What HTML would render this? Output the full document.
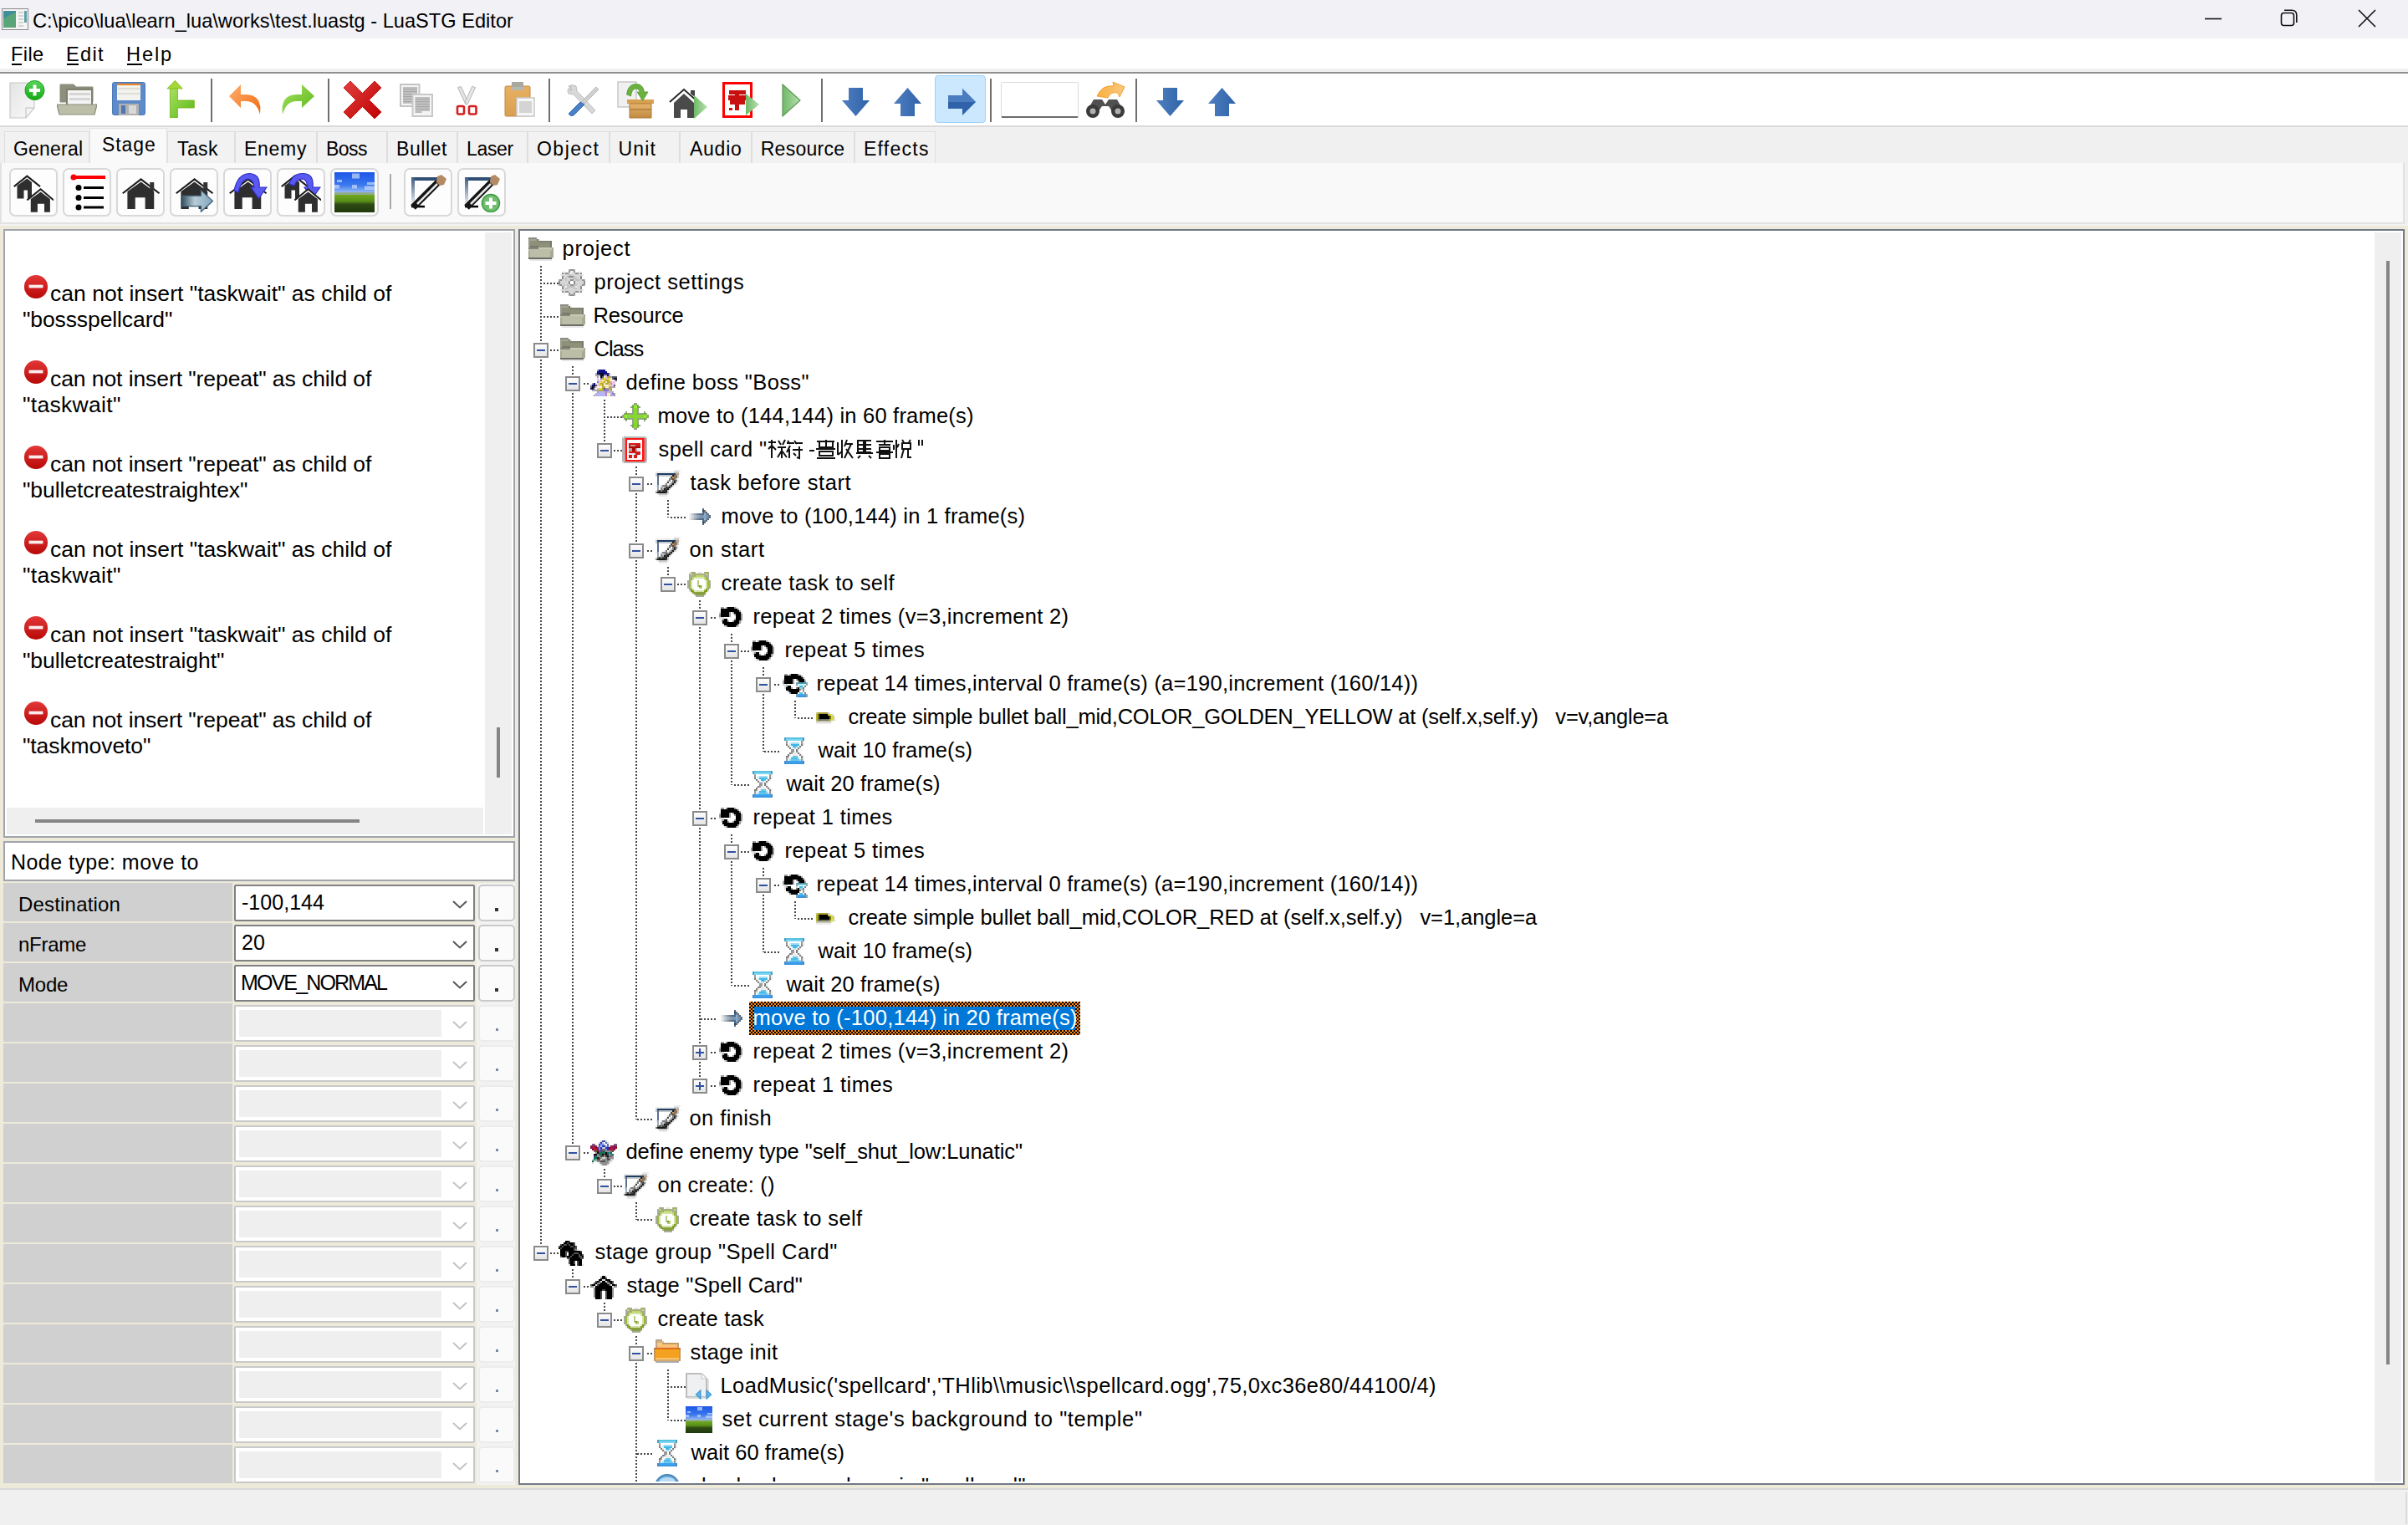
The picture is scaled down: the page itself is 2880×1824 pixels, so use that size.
<!DOCTYPE html><html><head><meta charset="utf-8"><title>LuaSTG Editor</title><style>
*{margin:0;padding:0;box-sizing:border-box}
html,body{width:2880px;height:1824px;overflow:hidden;background:#f0f0f0;font-family:"Liberation Sans", sans-serif;color:#000}
.t{position:absolute;white-space:pre;line-height:1}
.r{position:absolute}
.i{position:absolute;overflow:visible}
.b{position:absolute}
</style></head><body>
<svg width="0" height="0" style="position:absolute">
<defs>
<linearGradient id="gFoldF" x1="0" y1="0" x2="0" y2="1"><stop offset="0" stop-color="#cfd0bb"/><stop offset="1" stop-color="#b6b7a0"/></linearGradient>
<linearGradient id="gOrF" x1="0" y1="0" x2="0" y2="1"><stop offset="0" stop-color="#f7b34a"/><stop offset="1" stop-color="#f29a1c"/></linearGradient>
<linearGradient id="gArrow" x1="0" y1="0" x2="1" y2="0"><stop offset="0" stop-color="#f2f4f6"/><stop offset="0.6" stop-color="#8fa6bb"/><stop offset="1" stop-color="#6f8ba5"/></linearGradient>
<linearGradient id="gErr" x1="0" y1="0" x2="0" y2="1"><stop offset="0" stop-color="#e33838"/><stop offset="1" stop-color="#b80808"/></linearGradient>
<linearGradient id="gSky" x1="0" y1="0" x2="0" y2="1"><stop offset="0" stop-color="#2a62e6"/><stop offset="0.55" stop-color="#8eb2f0"/><stop offset="0.56" stop-color="#7fb23a"/><stop offset="1" stop-color="#2f4a14"/></linearGradient>
<linearGradient id="gPenF" x1="0" y1="0" x2="0" y2="1"><stop offset="0" stop-color="#3a5a80"/><stop offset="1" stop-color="#ffffff"/></linearGradient>
<linearGradient id="gBlue" x1="0" y1="0" x2="1" y2="0"><stop offset="0" stop-color="#4f7fc0"/><stop offset="1" stop-color="#2f62a8"/></linearGradient>
<linearGradient id="gExp" x1="0" y1="0" x2="0" y2="1"><stop offset="0" stop-color="#ffffff"/><stop offset="1" stop-color="#e2e2e2"/></linearGradient>
<linearGradient id="gPlay" x1="0" y1="0" x2="1" y2="0"><stop offset="0" stop-color="#6fb868"/><stop offset="1" stop-color="#b9e0b0"/></linearGradient>
<linearGradient id="gBrown" x1="0" y1="0" x2="0" y2="1"><stop offset="0" stop-color="#e6b66e"/><stop offset="1" stop-color="#c08a3e"/></linearGradient>

<!-- ===== tree icons (32x32 box) ===== -->
<symbol id="boss" viewBox="0 0 32 32"><rect x="8" y="0" width="2" height="2" fill="#a4a4b0"/><rect x="10" y="0" width="8" height="2" fill="#10108a"/><rect x="18" y="0" width="2" height="2" fill="#fcf8f4"/><rect x="8" y="2" width="12" height="2" fill="#10108a"/><rect x="20" y="2" width="2" height="2" fill="#fcf8f4"/><rect x="6" y="4" width="2" height="2" fill="#a4a4b0"/><rect x="8" y="4" width="2" height="2" fill="#10108a"/><rect x="10" y="4" width="6" height="2" fill="#0a0a24"/><rect x="16" y="4" width="6" height="2" fill="#10108a"/><rect x="22" y="4" width="2" height="2" fill="#a4a4b0"/><rect x="6" y="6" width="6" height="2" fill="#a4a4b0"/><rect x="12" y="6" width="4" height="2" fill="#0a0a24"/><rect x="16" y="6" width="4" height="2" fill="#a4a4b0"/><rect x="20" y="6" width="2" height="2" fill="#10108a"/><rect x="22" y="6" width="2" height="2" fill="#a4a4b0"/><rect x="6" y="8" width="2" height="2" fill="#fcf8f4"/><rect x="8" y="8" width="2" height="2" fill="#a4a4b0"/><rect x="10" y="8" width="2" height="2" fill="#fcf8f4"/><rect x="12" y="8" width="2" height="2" fill="#0a0a24"/><rect x="14" y="8" width="2" height="2" fill="#585868"/><rect x="16" y="8" width="2" height="2" fill="#f8f0c4"/><rect x="18" y="8" width="2" height="2" fill="#ecc4ec"/><rect x="20" y="8" width="4" height="2" fill="#b8a834"/><rect x="24" y="8" width="2" height="2" fill="#a4a4b0"/><rect x="26" y="8" width="6" height="2" fill="#585868"/><rect x="8" y="10" width="2" height="2" fill="#ecc4ec"/><rect x="10" y="10" width="2" height="2" fill="#fcf8f4"/><rect x="12" y="10" width="2" height="2" fill="#7a7ad8"/><rect x="14" y="10" width="2" height="2" fill="#b8a834"/><rect x="16" y="10" width="2" height="2" fill="#e8d840"/><rect x="18" y="10" width="2" height="2" fill="#e4b4a4"/><rect x="20" y="10" width="4" height="2" fill="#e8d840"/><rect x="24" y="10" width="2" height="2" fill="#f8f0c4"/><rect x="26" y="10" width="2" height="2" fill="#585868"/><rect x="28" y="10" width="4" height="2" fill="#0a0a24"/><rect x="8" y="12" width="6" height="2" fill="#ecc4ec"/><rect x="14" y="12" width="2" height="2" fill="#f8f0c4"/><rect x="16" y="12" width="2" height="2" fill="#e8d840"/><rect x="18" y="12" width="4" height="2" fill="#b8a834"/><rect x="22" y="12" width="2" height="2" fill="#e8d840"/><rect x="24" y="12" width="2" height="2" fill="#f8f0c4"/><rect x="26" y="12" width="2" height="2" fill="#fcf8f4"/><rect x="28" y="12" width="2" height="2" fill="#ecc4ec"/><rect x="30" y="12" width="2" height="2" fill="#585868"/><rect x="8" y="14" width="2" height="2" fill="#7a7ad8"/><rect x="10" y="14" width="2" height="2" fill="#ecc4ec"/><rect x="12" y="14" width="4" height="2" fill="#e8d840"/><rect x="16" y="14" width="2" height="2" fill="#b8a834"/><rect x="18" y="14" width="2" height="2" fill="#f8f0c4"/><rect x="20" y="14" width="4" height="2" fill="#b8a834"/><rect x="24" y="14" width="2" height="2" fill="#e4b4a4"/><rect x="26" y="14" width="4" height="2" fill="#ecc4ec"/><rect x="2" y="16" width="2" height="2" fill="#a4a4b0"/><rect x="4" y="16" width="2" height="2" fill="#10108a"/><rect x="6" y="16" width="2" height="2" fill="#fcf8f4"/><rect x="8" y="16" width="2" height="2" fill="#ecc4ec"/><rect x="10" y="16" width="2" height="2" fill="#e8d840"/><rect x="12" y="16" width="4" height="2" fill="#b8a834"/><rect x="16" y="16" width="2" height="2" fill="#f8f0c4"/><rect x="18" y="16" width="4" height="2" fill="#b8a834"/><rect x="22" y="16" width="2" height="2" fill="#e8d840"/><rect x="24" y="16" width="2" height="2" fill="#b08ab8"/><rect x="26" y="16" width="4" height="2" fill="#ecc4ec"/><rect x="0" y="18" width="2" height="2" fill="#a4a4b0"/><rect x="2" y="18" width="2" height="2" fill="#10108a"/><rect x="4" y="18" width="2" height="2" fill="#0a0a24"/><rect x="6" y="18" width="2" height="2" fill="#585868"/><rect x="8" y="18" width="2" height="2" fill="#ecc4ec"/><rect x="10" y="18" width="2" height="2" fill="#e4b4a4"/><rect x="12" y="18" width="2" height="2" fill="#e8d840"/><rect x="14" y="18" width="2" height="2" fill="#b8a834"/><rect x="16" y="18" width="6" height="2" fill="#f8f0c4"/><rect x="22" y="18" width="2" height="2" fill="#e8d840"/><rect x="24" y="18" width="4" height="2" fill="#ecc4ec"/><rect x="28" y="18" width="2" height="2" fill="#585868"/><rect x="0" y="20" width="2" height="2" fill="#585868"/><rect x="2" y="20" width="2" height="2" fill="#0a0a24"/><rect x="4" y="20" width="2" height="2" fill="#585868"/><rect x="6" y="20" width="2" height="2" fill="#ecc4ec"/><rect x="8" y="20" width="2" height="2" fill="#fcf8f4"/><rect x="10" y="20" width="2" height="2" fill="#f8f0c4"/><rect x="12" y="20" width="2" height="2" fill="#fcf8f4"/><rect x="14" y="20" width="4" height="2" fill="#b8a834"/><rect x="18" y="20" width="4" height="2" fill="#f8f0c4"/><rect x="22" y="20" width="2" height="2" fill="#b8a834"/><rect x="24" y="20" width="6" height="2" fill="#a4a4b0"/><rect x="0" y="22" width="2" height="2" fill="#10108a"/><rect x="2" y="22" width="2" height="2" fill="#0a0a24"/><rect x="4" y="22" width="2" height="2" fill="#a4a4b0"/><rect x="6" y="22" width="2" height="2" fill="#fcf8f4"/><rect x="8" y="22" width="2" height="2" fill="#e4b4a4"/><rect x="10" y="22" width="4" height="2" fill="#e8d840"/><rect x="14" y="22" width="2" height="2" fill="#b8a834"/><rect x="16" y="22" width="2" height="2" fill="#585868"/><rect x="18" y="22" width="4" height="2" fill="#b08ab8"/><rect x="22" y="22" width="4" height="2" fill="#b8a834"/><rect x="0" y="24" width="2" height="2" fill="#fcf8f4"/><rect x="2" y="24" width="8" height="2" fill="#a4a4b0"/><rect x="10" y="24" width="6" height="2" fill="#b8a834"/><rect x="16" y="24" width="6" height="2" fill="#7a7ad8"/><rect x="22" y="24" width="2" height="2" fill="#b4b4f4"/><rect x="24" y="24" width="2" height="2" fill="#b8a834"/><rect x="6" y="26" width="2" height="2" fill="#fcf8f4"/><rect x="8" y="26" width="2" height="2" fill="#a4a4b0"/><rect x="10" y="26" width="8" height="2" fill="#b4b4f4"/><rect x="18" y="26" width="2" height="2" fill="#b08ab8"/><rect x="20" y="26" width="2" height="2" fill="#e4b4a4"/><rect x="22" y="26" width="4" height="2" fill="#b4b4f4"/><rect x="26" y="26" width="2" height="2" fill="#a4a4b0"/><rect x="4" y="28" width="2" height="2" fill="#fcf8f4"/><rect x="6" y="28" width="12" height="2" fill="#b4b4f4"/><rect x="18" y="28" width="2" height="2" fill="#b08ab8"/><rect x="20" y="28" width="4" height="2" fill="#f8f0c4"/><rect x="24" y="28" width="2" height="2" fill="#b4b4f4"/><rect x="26" y="28" width="2" height="2" fill="#7a7ad8"/><rect x="28" y="28" width="2" height="2" fill="#a4a4b0"/><rect x="2" y="30" width="2" height="2" fill="#fcf8f4"/><rect x="4" y="30" width="2" height="2" fill="#a4a4b0"/><rect x="6" y="30" width="12" height="2" fill="#b4b4f4"/><rect x="18" y="30" width="2" height="2" fill="#b08ab8"/><rect x="20" y="30" width="4" height="2" fill="#f8f0c4"/><rect x="24" y="30" width="2" height="2" fill="#a4a4b0"/><rect x="26" y="30" width="2" height="2" fill="#b4b4f4"/><rect x="28" y="30" width="2" height="2" fill="#b08ab8"/><rect x="30" y="30" width="2" height="2" fill="#fcf8f4"/></symbol><symbol id="enemy" viewBox="0 0 32 32"><rect x="12" y="2" width="2" height="2" fill="#d4d4d4"/><rect x="14" y="2" width="4" height="2" fill="#4050a0"/><rect x="18" y="2" width="2" height="2" fill="#d4d4d4"/><rect x="10" y="4" width="2" height="2" fill="#d4d4d4"/><rect x="12" y="4" width="2" height="2" fill="#2038b8"/><rect x="14" y="4" width="2" height="2" fill="#b8c4f4"/><rect x="16" y="4" width="2" height="2" fill="#f4f4ff"/><rect x="18" y="4" width="2" height="2" fill="#6070a0"/><rect x="20" y="4" width="2" height="2" fill="#d4d4d4"/><rect x="2" y="6" width="4" height="2" fill="#806878"/><rect x="10" y="6" width="2" height="2" fill="#4050a0"/><rect x="12" y="6" width="4" height="2" fill="#7888f0"/><rect x="16" y="6" width="2" height="2" fill="#b8c4f4"/><rect x="18" y="6" width="2" height="2" fill="#f4f4ff"/><rect x="20" y="6" width="2" height="2" fill="#6070a0"/><rect x="28" y="6" width="4" height="2" fill="#806878"/><rect x="0" y="8" width="8" height="2" fill="#8a1a5a"/><rect x="8" y="8" width="2" height="2" fill="#d4d4d4"/><rect x="10" y="8" width="2" height="2" fill="#6070a0"/><rect x="12" y="8" width="2" height="2" fill="#b8c4f4"/><rect x="14" y="8" width="4" height="2" fill="#2038b8"/><rect x="18" y="8" width="2" height="2" fill="#b8c4f4"/><rect x="20" y="8" width="2" height="2" fill="#6070a0"/><rect x="22" y="8" width="2" height="2" fill="#d4d4d4"/><rect x="24" y="8" width="8" height="2" fill="#8a1a5a"/><rect x="0" y="10" width="2" height="2" fill="#880818"/><rect x="2" y="10" width="2" height="2" fill="#8a1a5a"/><rect x="4" y="10" width="2" height="2" fill="#c81030"/><rect x="6" y="10" width="2" height="2" fill="#880818"/><rect x="8" y="10" width="2" height="2" fill="#502880"/><rect x="10" y="10" width="2" height="2" fill="#7888f0"/><rect x="12" y="10" width="2" height="2" fill="#2038b8"/><rect x="14" y="10" width="2" height="2" fill="#b8c4f4"/><rect x="16" y="10" width="2" height="2" fill="#d4d4d4"/><rect x="18" y="10" width="4" height="2" fill="#2038b8"/><rect x="22" y="10" width="2" height="2" fill="#880818"/><rect x="24" y="10" width="2" height="2" fill="#c81030"/><rect x="26" y="10" width="4" height="2" fill="#8a1a5a"/><rect x="30" y="10" width="2" height="2" fill="#880818"/><rect x="2" y="12" width="2" height="2" fill="#880818"/><rect x="4" y="12" width="4" height="2" fill="#c81030"/><rect x="8" y="12" width="2" height="2" fill="#502880"/><rect x="10" y="12" width="2" height="2" fill="#7888f0"/><rect x="12" y="12" width="2" height="2" fill="#4050a0"/><rect x="14" y="12" width="4" height="2" fill="#806878"/><rect x="18" y="12" width="2" height="2" fill="#7888f0"/><rect x="20" y="12" width="4" height="2" fill="#502880"/><rect x="24" y="12" width="4" height="2" fill="#c81030"/><rect x="28" y="12" width="2" height="2" fill="#880818"/><rect x="4" y="14" width="2" height="2" fill="#806878"/><rect x="6" y="14" width="2" height="2" fill="#605030"/><rect x="8" y="14" width="2" height="2" fill="#880818"/><rect x="10" y="14" width="4" height="2" fill="#4050a0"/><rect x="14" y="14" width="2" height="2" fill="#605030"/><rect x="16" y="14" width="2" height="2" fill="#107060"/><rect x="18" y="14" width="6" height="2" fill="#909090"/><rect x="24" y="14" width="2" height="2" fill="#806878"/><rect x="26" y="14" width="2" height="2" fill="#505050"/><rect x="6" y="16" width="2" height="2" fill="#909090"/><rect x="8" y="16" width="2" height="2" fill="#101010"/><rect x="10" y="16" width="2" height="2" fill="#605030"/><rect x="12" y="16" width="6" height="2" fill="#107060"/><rect x="18" y="16" width="2" height="2" fill="#101010"/><rect x="20" y="16" width="2" height="2" fill="#107060"/><rect x="22" y="16" width="2" height="2" fill="#10a070"/><rect x="24" y="16" width="2" height="2" fill="#107060"/><rect x="4" y="18" width="4" height="2" fill="#101010"/><rect x="8" y="18" width="2" height="2" fill="#909090"/><rect x="10" y="18" width="4" height="2" fill="#107060"/><rect x="14" y="18" width="2" height="2" fill="#101010"/><rect x="16" y="18" width="2" height="2" fill="#605030"/><rect x="18" y="18" width="2" height="2" fill="#101010"/><rect x="20" y="18" width="2" height="2" fill="#502880"/><rect x="22" y="18" width="2" height="2" fill="#909090"/><rect x="24" y="18" width="2" height="2" fill="#10a070"/><rect x="26" y="18" width="2" height="2" fill="#107060"/><rect x="4" y="20" width="2" height="2" fill="#502880"/><rect x="6" y="20" width="2" height="2" fill="#107060"/><rect x="8" y="20" width="4" height="2" fill="#909090"/><rect x="12" y="20" width="2" height="2" fill="#605030"/><rect x="14" y="20" width="2" height="2" fill="#505050"/><rect x="16" y="20" width="2" height="2" fill="#909090"/><rect x="18" y="20" width="2" height="2" fill="#505050"/><rect x="20" y="20" width="2" height="2" fill="#101010"/><rect x="22" y="20" width="4" height="2" fill="#806878"/><rect x="26" y="20" width="2" height="2" fill="#909090"/><rect x="4" y="22" width="4" height="2" fill="#107060"/><rect x="8" y="22" width="2" height="2" fill="#101010"/><rect x="10" y="22" width="2" height="2" fill="#605030"/><rect x="12" y="22" width="2" height="2" fill="#909090"/><rect x="14" y="22" width="4" height="2" fill="#d4d4d4"/><rect x="18" y="22" width="2" height="2" fill="#909090"/><rect x="20" y="22" width="2" height="2" fill="#505050"/><rect x="22" y="22" width="6" height="2" fill="#909090"/><rect x="2" y="24" width="2" height="2" fill="#d4d4d4"/><rect x="4" y="24" width="2" height="2" fill="#10a070"/><rect x="6" y="24" width="2" height="2" fill="#909090"/><rect x="8" y="24" width="2" height="2" fill="#605030"/><rect x="10" y="24" width="2" height="2" fill="#505050"/><rect x="12" y="24" width="2" height="2" fill="#d4d4d4"/><rect x="14" y="24" width="6" height="2" fill="#909090"/><rect x="20" y="24" width="4" height="2" fill="#505050"/><rect x="24" y="24" width="4" height="2" fill="#d4d4d4"/><rect x="2" y="26" width="2" height="2" fill="#107060"/><rect x="4" y="26" width="4" height="2" fill="#d4d4d4"/><rect x="8" y="26" width="4" height="2" fill="#909090"/><rect x="12" y="26" width="6" height="2" fill="#505050"/><rect x="18" y="26" width="4" height="2" fill="#909090"/><rect x="22" y="26" width="4" height="2" fill="#d4d4d4"/><rect x="2" y="28" width="2" height="2" fill="#d4d4d4"/><rect x="10" y="28" width="2" height="2" fill="#d4d4d4"/><rect x="12" y="28" width="10" height="2" fill="#909090"/><rect x="22" y="28" width="2" height="2" fill="#d4d4d4"/><rect x="12" y="30" width="2" height="2" fill="#d4d4d4"/><rect x="14" y="30" width="6" height="2" fill="#909090"/><rect x="20" y="30" width="2" height="2" fill="#d4d4d4"/></symbol><symbol id="gcross" viewBox="0 0 32 32"><rect x="14" y="0" width="4" height="2" fill="#94a486"/><rect x="12" y="2" width="2" height="2" fill="#94a486"/><rect x="14" y="2" width="4" height="2" fill="#86d830"/><rect x="18" y="2" width="2" height="2" fill="#94a486"/><rect x="10" y="4" width="2" height="2" fill="#94a486"/><rect x="12" y="4" width="2" height="2" fill="#62b022"/><rect x="14" y="4" width="4" height="2" fill="#9cec44"/><rect x="18" y="4" width="2" height="2" fill="#62b022"/><rect x="20" y="4" width="2" height="2" fill="#94a486"/><rect x="12" y="6" width="2" height="2" fill="#94a486"/><rect x="14" y="6" width="4" height="2" fill="#86d830"/><rect x="18" y="6" width="2" height="2" fill="#94a486"/><rect x="12" y="8" width="2" height="2" fill="#94a486"/><rect x="14" y="8" width="4" height="2" fill="#86d830"/><rect x="18" y="8" width="2" height="2" fill="#94a486"/><rect x="4" y="10" width="2" height="2" fill="#94a486"/><rect x="12" y="10" width="2" height="2" fill="#94a486"/><rect x="14" y="10" width="4" height="2" fill="#86d830"/><rect x="18" y="10" width="2" height="2" fill="#94a486"/><rect x="26" y="10" width="2" height="2" fill="#94a486"/><rect x="2" y="12" width="2" height="2" fill="#94a486"/><rect x="4" y="12" width="2" height="2" fill="#62b022"/><rect x="6" y="12" width="8" height="2" fill="#94a486"/><rect x="14" y="12" width="4" height="2" fill="#86d830"/><rect x="18" y="12" width="8" height="2" fill="#94a486"/><rect x="26" y="12" width="2" height="2" fill="#62b022"/><rect x="28" y="12" width="2" height="2" fill="#94a486"/><rect x="0" y="14" width="2" height="2" fill="#94a486"/><rect x="2" y="14" width="2" height="2" fill="#86d830"/><rect x="4" y="14" width="2" height="2" fill="#9cec44"/><rect x="6" y="14" width="20" height="2" fill="#86d830"/><rect x="26" y="14" width="2" height="2" fill="#9cec44"/><rect x="28" y="14" width="2" height="2" fill="#86d830"/><rect x="30" y="14" width="2" height="2" fill="#94a486"/><rect x="0" y="16" width="2" height="2" fill="#94a486"/><rect x="2" y="16" width="2" height="2" fill="#86d830"/><rect x="4" y="16" width="2" height="2" fill="#9cec44"/><rect x="6" y="16" width="20" height="2" fill="#86d830"/><rect x="26" y="16" width="2" height="2" fill="#9cec44"/><rect x="28" y="16" width="2" height="2" fill="#86d830"/><rect x="30" y="16" width="2" height="2" fill="#94a486"/><rect x="2" y="18" width="2" height="2" fill="#94a486"/><rect x="4" y="18" width="2" height="2" fill="#62b022"/><rect x="6" y="18" width="8" height="2" fill="#94a486"/><rect x="14" y="18" width="4" height="2" fill="#86d830"/><rect x="18" y="18" width="8" height="2" fill="#94a486"/><rect x="26" y="18" width="2" height="2" fill="#62b022"/><rect x="28" y="18" width="2" height="2" fill="#94a486"/><rect x="4" y="20" width="2" height="2" fill="#94a486"/><rect x="12" y="20" width="2" height="2" fill="#94a486"/><rect x="14" y="20" width="4" height="2" fill="#86d830"/><rect x="18" y="20" width="2" height="2" fill="#94a486"/><rect x="26" y="20" width="2" height="2" fill="#94a486"/><rect x="12" y="22" width="2" height="2" fill="#94a486"/><rect x="14" y="22" width="4" height="2" fill="#86d830"/><rect x="18" y="22" width="2" height="2" fill="#94a486"/><rect x="12" y="24" width="2" height="2" fill="#94a486"/><rect x="14" y="24" width="4" height="2" fill="#86d830"/><rect x="18" y="24" width="2" height="2" fill="#94a486"/><rect x="10" y="26" width="2" height="2" fill="#94a486"/><rect x="12" y="26" width="2" height="2" fill="#62b022"/><rect x="14" y="26" width="4" height="2" fill="#86d830"/><rect x="18" y="26" width="2" height="2" fill="#62b022"/><rect x="20" y="26" width="2" height="2" fill="#94a486"/><rect x="12" y="28" width="2" height="2" fill="#94a486"/><rect x="14" y="28" width="4" height="2" fill="#86d830"/><rect x="18" y="28" width="2" height="2" fill="#94a486"/><rect x="14" y="30" width="4" height="2" fill="#94a486"/></symbol><symbol id="gear" viewBox="0 0 32 32"><rect x="12" y="0" width="2" height="2" fill="#aaaaaa"/><rect x="14" y="0" width="4" height="2" fill="#8e8e8e"/><rect x="18" y="0" width="2" height="2" fill="#aaaaaa"/><rect x="6" y="2" width="2" height="2" fill="#eaeaea"/><rect x="12" y="2" width="2" height="2" fill="#8e8e8e"/><rect x="14" y="2" width="4" height="2" fill="#f2f2f2"/><rect x="18" y="2" width="2" height="2" fill="#8e8e8e"/><rect x="24" y="2" width="2" height="2" fill="#eaeaea"/><rect x="4" y="4" width="2" height="2" fill="#8e8e8e"/><rect x="6" y="4" width="2" height="2" fill="#d6d6d6"/><rect x="8" y="4" width="4" height="2" fill="#8e8e8e"/><rect x="12" y="4" width="2" height="2" fill="#d6d6d6"/><rect x="14" y="4" width="2" height="2" fill="#f2f2f2"/><rect x="16" y="4" width="4" height="2" fill="#d6d6d6"/><rect x="20" y="4" width="4" height="2" fill="#8e8e8e"/><rect x="24" y="4" width="2" height="2" fill="#d6d6d6"/><rect x="26" y="4" width="2" height="2" fill="#8e8e8e"/><rect x="2" y="6" width="2" height="2" fill="#eaeaea"/><rect x="4" y="6" width="8" height="2" fill="#d6d6d6"/><rect x="12" y="6" width="4" height="2" fill="#c2c2c2"/><rect x="16" y="6" width="12" height="2" fill="#d6d6d6"/><rect x="28" y="6" width="2" height="2" fill="#eaeaea"/><rect x="4" y="8" width="2" height="2" fill="#8e8e8e"/><rect x="6" y="8" width="4" height="2" fill="#d6d6d6"/><rect x="10" y="8" width="2" height="2" fill="#c2c2c2"/><rect x="12" y="8" width="6" height="2" fill="#8e8e8e"/><rect x="18" y="8" width="2" height="2" fill="#c2c2c2"/><rect x="20" y="8" width="6" height="2" fill="#d6d6d6"/><rect x="26" y="8" width="2" height="2" fill="#8e8e8e"/><rect x="4" y="10" width="2" height="2" fill="#8e8e8e"/><rect x="6" y="10" width="2" height="2" fill="#d6d6d6"/><rect x="8" y="10" width="2" height="2" fill="#c2c2c2"/><rect x="10" y="10" width="8" height="2" fill="#d6d6d6"/><rect x="18" y="10" width="4" height="2" fill="#c2c2c2"/><rect x="22" y="10" width="4" height="2" fill="#d6d6d6"/><rect x="26" y="10" width="2" height="2" fill="#8e8e8e"/><rect x="0" y="12" width="2" height="2" fill="#aaaaaa"/><rect x="2" y="12" width="2" height="2" fill="#8e8e8e"/><rect x="4" y="12" width="4" height="2" fill="#d6d6d6"/><rect x="8" y="12" width="2" height="2" fill="#c2c2c2"/><rect x="10" y="12" width="4" height="2" fill="#d6d6d6"/><rect x="14" y="12" width="4" height="2" fill="#8e8e8e"/><rect x="18" y="12" width="2" height="2" fill="#d6d6d6"/><rect x="20" y="12" width="6" height="2" fill="#c2c2c2"/><rect x="26" y="12" width="2" height="2" fill="#d6d6d6"/><rect x="28" y="12" width="2" height="2" fill="#8e8e8e"/><rect x="30" y="12" width="2" height="2" fill="#aaaaaa"/><rect x="0" y="14" width="2" height="2" fill="#8e8e8e"/><rect x="2" y="14" width="10" height="2" fill="#d6d6d6"/><rect x="12" y="14" width="2" height="2" fill="#8e8e8e"/><rect x="18" y="14" width="2" height="2" fill="#8e8e8e"/><rect x="20" y="14" width="10" height="2" fill="#d6d6d6"/><rect x="30" y="14" width="2" height="2" fill="#8e8e8e"/><rect x="0" y="16" width="2" height="2" fill="#8e8e8e"/><rect x="2" y="16" width="10" height="2" fill="#d6d6d6"/><rect x="12" y="16" width="2" height="2" fill="#8e8e8e"/><rect x="18" y="16" width="2" height="2" fill="#8e8e8e"/><rect x="20" y="16" width="10" height="2" fill="#d6d6d6"/><rect x="30" y="16" width="2" height="2" fill="#8e8e8e"/><rect x="0" y="18" width="2" height="2" fill="#aaaaaa"/><rect x="2" y="18" width="2" height="2" fill="#8e8e8e"/><rect x="4" y="18" width="2" height="2" fill="#d6d6d6"/><rect x="6" y="18" width="2" height="2" fill="#c2c2c2"/><rect x="8" y="18" width="2" height="2" fill="#d6d6d6"/><rect x="10" y="18" width="2" height="2" fill="#c2c2c2"/><rect x="12" y="18" width="2" height="2" fill="#d6d6d6"/><rect x="14" y="18" width="4" height="2" fill="#8e8e8e"/><rect x="18" y="18" width="4" height="2" fill="#c2c2c2"/><rect x="22" y="18" width="6" height="2" fill="#d6d6d6"/><rect x="28" y="18" width="2" height="2" fill="#8e8e8e"/><rect x="30" y="18" width="2" height="2" fill="#aaaaaa"/><rect x="4" y="20" width="2" height="2" fill="#8e8e8e"/><rect x="6" y="20" width="2" height="2" fill="#d6d6d6"/><rect x="8" y="20" width="2" height="2" fill="#f2f2f2"/><rect x="10" y="20" width="10" height="2" fill="#c2c2c2"/><rect x="20" y="20" width="2" height="2" fill="#f2f2f2"/><rect x="22" y="20" width="4" height="2" fill="#d6d6d6"/><rect x="26" y="20" width="2" height="2" fill="#8e8e8e"/><rect x="4" y="22" width="2" height="2" fill="#8e8e8e"/><rect x="6" y="22" width="2" height="2" fill="#d6d6d6"/><rect x="8" y="22" width="4" height="2" fill="#c2c2c2"/><rect x="12" y="22" width="6" height="2" fill="#d6d6d6"/><rect x="18" y="22" width="4" height="2" fill="#c2c2c2"/><rect x="22" y="22" width="4" height="2" fill="#d6d6d6"/><rect x="26" y="22" width="2" height="2" fill="#8e8e8e"/><rect x="2" y="24" width="2" height="2" fill="#eaeaea"/><rect x="4" y="24" width="24" height="2" fill="#d6d6d6"/><rect x="28" y="24" width="2" height="2" fill="#eaeaea"/><rect x="4" y="26" width="2" height="2" fill="#8e8e8e"/><rect x="6" y="26" width="2" height="2" fill="#d6d6d6"/><rect x="8" y="26" width="4" height="2" fill="#8e8e8e"/><rect x="12" y="26" width="8" height="2" fill="#d6d6d6"/><rect x="20" y="26" width="4" height="2" fill="#8e8e8e"/><rect x="24" y="26" width="2" height="2" fill="#d6d6d6"/><rect x="26" y="26" width="2" height="2" fill="#8e8e8e"/><rect x="6" y="28" width="2" height="2" fill="#eaeaea"/><rect x="12" y="28" width="2" height="2" fill="#8e8e8e"/><rect x="14" y="28" width="4" height="2" fill="#d6d6d6"/><rect x="18" y="28" width="2" height="2" fill="#8e8e8e"/><rect x="24" y="28" width="2" height="2" fill="#eaeaea"/><rect x="12" y="30" width="2" height="2" fill="#aaaaaa"/><rect x="14" y="30" width="4" height="2" fill="#8e8e8e"/><rect x="18" y="30" width="2" height="2" fill="#aaaaaa"/></symbol><symbol id="spell" viewBox="0 0 32 32"><rect x="0" y="0" width="2" height="2" fill="#e4e4e4"/><rect x="2" y="0" width="26" height="2" fill="#b8b8b8"/><rect x="28" y="0" width="2" height="2" fill="#e4e4e4"/><rect x="0" y="2" width="2" height="2" fill="#b8b8b8"/><rect x="2" y="2" width="2" height="2" fill="#c8a4a4"/><rect x="4" y="2" width="22" height="2" fill="#ff1414"/><rect x="26" y="2" width="2" height="2" fill="#e46060"/><rect x="28" y="2" width="2" height="2" fill="#b8b8b8"/><rect x="0" y="4" width="2" height="2" fill="#b8b8b8"/><rect x="2" y="4" width="2" height="2" fill="#c8a4a4"/><rect x="4" y="4" width="2" height="2" fill="#ff1414"/><rect x="6" y="4" width="18" height="2" fill="#ffffff"/><rect x="24" y="4" width="2" height="2" fill="#ff1414"/><rect x="26" y="4" width="2" height="2" fill="#e46060"/><rect x="28" y="4" width="2" height="2" fill="#b8b8b8"/><rect x="0" y="6" width="2" height="2" fill="#b8b8b8"/><rect x="2" y="6" width="2" height="2" fill="#c8a4a4"/><rect x="4" y="6" width="2" height="2" fill="#ff1414"/><rect x="6" y="6" width="18" height="2" fill="#ffffff"/><rect x="24" y="6" width="2" height="2" fill="#ff1414"/><rect x="26" y="6" width="2" height="2" fill="#e46060"/><rect x="28" y="6" width="2" height="2" fill="#b8b8b8"/><rect x="0" y="8" width="2" height="2" fill="#b8b8b8"/><rect x="2" y="8" width="2" height="2" fill="#c8a4a4"/><rect x="4" y="8" width="2" height="2" fill="#ff1414"/><rect x="6" y="8" width="2" height="2" fill="#ffffff"/><rect x="8" y="8" width="14" height="2" fill="#d41a1a"/><rect x="22" y="8" width="2" height="2" fill="#ffffff"/><rect x="24" y="8" width="2" height="2" fill="#ff1414"/><rect x="26" y="8" width="2" height="2" fill="#e46060"/><rect x="28" y="8" width="2" height="2" fill="#b8b8b8"/><rect x="0" y="10" width="2" height="2" fill="#b8b8b8"/><rect x="2" y="10" width="2" height="2" fill="#c8a4a4"/><rect x="4" y="10" width="2" height="2" fill="#ff1414"/><rect x="6" y="10" width="2" height="2" fill="#ffffff"/><rect x="8" y="10" width="2" height="2" fill="#d41a1a"/><rect x="10" y="10" width="6" height="2" fill="#c89898"/><rect x="16" y="10" width="6" height="2" fill="#d41a1a"/><rect x="22" y="10" width="2" height="2" fill="#ffffff"/><rect x="24" y="10" width="2" height="2" fill="#ff1414"/><rect x="26" y="10" width="2" height="2" fill="#e46060"/><rect x="28" y="10" width="2" height="2" fill="#b8b8b8"/><rect x="0" y="12" width="2" height="2" fill="#b8b8b8"/><rect x="2" y="12" width="2" height="2" fill="#c8a4a4"/><rect x="4" y="12" width="2" height="2" fill="#ff1414"/><rect x="6" y="12" width="2" height="2" fill="#ffffff"/><rect x="8" y="12" width="14" height="2" fill="#a80a0a"/><rect x="22" y="12" width="2" height="2" fill="#ffffff"/><rect x="24" y="12" width="2" height="2" fill="#ff1414"/><rect x="26" y="12" width="2" height="2" fill="#e46060"/><rect x="28" y="12" width="2" height="2" fill="#b8b8b8"/><rect x="0" y="14" width="2" height="2" fill="#b8b8b8"/><rect x="2" y="14" width="2" height="2" fill="#c8a4a4"/><rect x="4" y="14" width="2" height="2" fill="#ff1414"/><rect x="6" y="14" width="2" height="2" fill="#ffffff"/><rect x="8" y="14" width="4" height="2" fill="#c89898"/><rect x="12" y="14" width="4" height="2" fill="#a80a0a"/><rect x="16" y="14" width="2" height="2" fill="#c89898"/><rect x="18" y="14" width="4" height="2" fill="#e4eeee"/><rect x="22" y="14" width="2" height="2" fill="#ffffff"/><rect x="24" y="14" width="2" height="2" fill="#ff1414"/><rect x="26" y="14" width="2" height="2" fill="#e46060"/><rect x="28" y="14" width="2" height="2" fill="#b8b8b8"/><rect x="0" y="16" width="2" height="2" fill="#b8b8b8"/><rect x="2" y="16" width="2" height="2" fill="#c8a4a4"/><rect x="4" y="16" width="2" height="2" fill="#ff1414"/><rect x="6" y="16" width="2" height="2" fill="#ffffff"/><rect x="8" y="16" width="4" height="2" fill="#c89898"/><rect x="12" y="16" width="4" height="2" fill="#a80a0a"/><rect x="16" y="16" width="2" height="2" fill="#c89898"/><rect x="18" y="16" width="4" height="2" fill="#e4eeee"/><rect x="22" y="16" width="2" height="2" fill="#ffffff"/><rect x="24" y="16" width="2" height="2" fill="#ff1414"/><rect x="26" y="16" width="2" height="2" fill="#e46060"/><rect x="28" y="16" width="2" height="2" fill="#b8b8b8"/><rect x="0" y="18" width="2" height="2" fill="#b8b8b8"/><rect x="2" y="18" width="2" height="2" fill="#c8a4a4"/><rect x="4" y="18" width="2" height="2" fill="#ff1414"/><rect x="6" y="18" width="2" height="2" fill="#ffffff"/><rect x="8" y="18" width="14" height="2" fill="#d41a1a"/><rect x="22" y="18" width="2" height="2" fill="#ffffff"/><rect x="24" y="18" width="2" height="2" fill="#ff1414"/><rect x="26" y="18" width="2" height="2" fill="#e46060"/><rect x="28" y="18" width="2" height="2" fill="#b8b8b8"/><rect x="0" y="20" width="2" height="2" fill="#b8b8b8"/><rect x="2" y="20" width="2" height="2" fill="#c8a4a4"/><rect x="4" y="20" width="2" height="2" fill="#ff1414"/><rect x="6" y="20" width="2" height="2" fill="#ffffff"/><rect x="8" y="20" width="8" height="2" fill="#e4eeee"/><rect x="16" y="20" width="6" height="2" fill="#d41a1a"/><rect x="22" y="20" width="2" height="2" fill="#ffffff"/><rect x="24" y="20" width="2" height="2" fill="#ff1414"/><rect x="26" y="20" width="2" height="2" fill="#e46060"/><rect x="28" y="20" width="2" height="2" fill="#b8b8b8"/><rect x="0" y="22" width="2" height="2" fill="#b8b8b8"/><rect x="2" y="22" width="2" height="2" fill="#c8a4a4"/><rect x="4" y="22" width="2" height="2" fill="#ff1414"/><rect x="6" y="22" width="2" height="2" fill="#ffffff"/><rect x="8" y="22" width="4" height="2" fill="#d41a1a"/><rect x="12" y="22" width="2" height="2" fill="#e4eeee"/><rect x="14" y="22" width="4" height="2" fill="#d41a1a"/><rect x="18" y="22" width="2" height="2" fill="#e4eeee"/><rect x="20" y="22" width="4" height="2" fill="#ffffff"/><rect x="24" y="22" width="2" height="2" fill="#ff1414"/><rect x="26" y="22" width="2" height="2" fill="#e46060"/><rect x="28" y="22" width="2" height="2" fill="#b8b8b8"/><rect x="0" y="24" width="2" height="2" fill="#b8b8b8"/><rect x="2" y="24" width="2" height="2" fill="#c8a4a4"/><rect x="4" y="24" width="2" height="2" fill="#ff1414"/><rect x="6" y="24" width="2" height="2" fill="#ffffff"/><rect x="8" y="24" width="4" height="2" fill="#d41a1a"/><rect x="12" y="24" width="2" height="2" fill="#ffffff"/><rect x="14" y="24" width="4" height="2" fill="#d41a1a"/><rect x="18" y="24" width="6" height="2" fill="#ffffff"/><rect x="24" y="24" width="2" height="2" fill="#ff1414"/><rect x="26" y="24" width="2" height="2" fill="#e46060"/><rect x="28" y="24" width="2" height="2" fill="#b8b8b8"/><rect x="0" y="26" width="2" height="2" fill="#b8b8b8"/><rect x="2" y="26" width="2" height="2" fill="#c8a4a4"/><rect x="4" y="26" width="2" height="2" fill="#ff1414"/><rect x="6" y="26" width="18" height="2" fill="#ffffff"/><rect x="24" y="26" width="2" height="2" fill="#ff1414"/><rect x="26" y="26" width="2" height="2" fill="#e46060"/><rect x="28" y="26" width="2" height="2" fill="#b8b8b8"/><rect x="0" y="28" width="2" height="2" fill="#b8b8b8"/><rect x="2" y="28" width="2" height="2" fill="#c8a4a4"/><rect x="4" y="28" width="22" height="2" fill="#ff1414"/><rect x="26" y="28" width="2" height="2" fill="#e46060"/><rect x="28" y="28" width="2" height="2" fill="#b8b8b8"/><rect x="0" y="30" width="2" height="2" fill="#e4e4e4"/><rect x="2" y="30" width="26" height="2" fill="#b8b8b8"/><rect x="28" y="30" width="2" height="2" fill="#e4e4e4"/></symbol><symbol id="pen" viewBox="0 0 32 32"><rect x="24" y="0" width="8" height="2" fill="#ececec"/><rect x="2" y="2" width="22" height="2" fill="#ececec"/><rect x="24" y="2" width="6" height="2" fill="#c8c8c8"/><rect x="2" y="4" width="2" height="2" fill="#c8c8c8"/><rect x="4" y="4" width="20" height="2" fill="#1c3c62"/><rect x="24" y="4" width="2" height="2" fill="#243a56"/><rect x="26" y="4" width="4" height="2" fill="#b8a898"/><rect x="30" y="4" width="2" height="2" fill="#ececec"/><rect x="2" y="6" width="2" height="2" fill="#c8c8c8"/><rect x="4" y="6" width="2" height="2" fill="#5a7090"/><rect x="6" y="6" width="16" height="2" fill="#c4c8cc"/><rect x="22" y="6" width="2" height="2" fill="#1a1a1a"/><rect x="24" y="6" width="4" height="2" fill="#907050"/><rect x="28" y="6" width="2" height="2" fill="#c8c8c8"/><rect x="4" y="8" width="2" height="2" fill="#5a7090"/><rect x="6" y="8" width="14" height="2" fill="#ffffff"/><rect x="20" y="8" width="2" height="2" fill="#404040"/><rect x="22" y="8" width="2" height="2" fill="#c89868"/><rect x="24" y="8" width="2" height="2" fill="#907050"/><rect x="26" y="8" width="2" height="2" fill="#808080"/><rect x="28" y="8" width="2" height="2" fill="#c8c8c8"/><rect x="4" y="10" width="2" height="2" fill="#5a7090"/><rect x="6" y="10" width="12" height="2" fill="#ffffff"/><rect x="18" y="10" width="4" height="2" fill="#808080"/><rect x="22" y="10" width="2" height="2" fill="#604830"/><rect x="24" y="10" width="2" height="2" fill="#907050"/><rect x="26" y="10" width="2" height="2" fill="#c8c8c8"/><rect x="4" y="12" width="2" height="2" fill="#5a7090"/><rect x="6" y="12" width="10" height="2" fill="#ffffff"/><rect x="16" y="12" width="2" height="2" fill="#c8c8c8"/><rect x="18" y="12" width="2" height="2" fill="#808080"/><rect x="20" y="12" width="2" height="2" fill="#ffffff"/><rect x="22" y="12" width="2" height="2" fill="#808080"/><rect x="24" y="12" width="2" height="2" fill="#404040"/><rect x="26" y="12" width="2" height="2" fill="#808080"/><rect x="28" y="12" width="2" height="2" fill="#ececec"/><rect x="4" y="14" width="2" height="2" fill="#5a7090"/><rect x="6" y="14" width="8" height="2" fill="#ffffff"/><rect x="14" y="14" width="2" height="2" fill="#ececec"/><rect x="16" y="14" width="2" height="2" fill="#404040"/><rect x="18" y="14" width="2" height="2" fill="#ffffff"/><rect x="20" y="14" width="2" height="2" fill="#c8c8c8"/><rect x="22" y="14" width="2" height="2" fill="#808080"/><rect x="24" y="14" width="2" height="2" fill="#1a1a1a"/><rect x="26" y="14" width="2" height="2" fill="#c8c8c8"/><rect x="4" y="16" width="2" height="2" fill="#5a7090"/><rect x="6" y="16" width="6" height="2" fill="#ffffff"/><rect x="12" y="16" width="2" height="2" fill="#ececec"/><rect x="14" y="16" width="2" height="2" fill="#808080"/><rect x="16" y="16" width="2" height="2" fill="#ffffff"/><rect x="18" y="16" width="2" height="2" fill="#c8c8c8"/><rect x="20" y="16" width="2" height="2" fill="#808080"/><rect x="22" y="16" width="2" height="2" fill="#1a1a1a"/><rect x="24" y="16" width="2" height="2" fill="#c8c8c8"/><rect x="26" y="16" width="2" height="2" fill="#ececec"/><rect x="2" y="18" width="2" height="2" fill="#ececec"/><rect x="4" y="18" width="2" height="2" fill="#9aaabd"/><rect x="6" y="18" width="2" height="2" fill="#ffffff"/><rect x="8" y="18" width="2" height="2" fill="#ececec"/><rect x="10" y="18" width="6" height="2" fill="#808080"/><rect x="16" y="18" width="2" height="2" fill="#c8c8c8"/><rect x="18" y="18" width="2" height="2" fill="#808080"/><rect x="20" y="18" width="2" height="2" fill="#1a1a1a"/><rect x="22" y="18" width="2" height="2" fill="#c8c8c8"/><rect x="4" y="20" width="2" height="2" fill="#9aaabd"/><rect x="6" y="20" width="2" height="2" fill="#ffffff"/><rect x="8" y="20" width="2" height="2" fill="#a4a4a4"/><rect x="10" y="20" width="2" height="2" fill="#c8c8c8"/><rect x="12" y="20" width="2" height="2" fill="#a4a4a4"/><rect x="14" y="20" width="4" height="2" fill="#404040"/><rect x="18" y="20" width="2" height="2" fill="#1a1a1a"/><rect x="20" y="20" width="2" height="2" fill="#c8c8c8"/><rect x="4" y="22" width="2" height="2" fill="#9aaabd"/><rect x="6" y="22" width="2" height="2" fill="#ffffff"/><rect x="8" y="22" width="2" height="2" fill="#808080"/><rect x="10" y="22" width="2" height="2" fill="#a4a4a4"/><rect x="12" y="22" width="2" height="2" fill="#1a1a1a"/><rect x="14" y="22" width="2" height="2" fill="#404040"/><rect x="16" y="22" width="2" height="2" fill="#1a1a1a"/><rect x="18" y="22" width="2" height="2" fill="#c8c8c8"/><rect x="2" y="24" width="2" height="2" fill="#ececec"/><rect x="4" y="24" width="2" height="2" fill="#808080"/><rect x="6" y="24" width="2" height="2" fill="#404040"/><rect x="8" y="24" width="2" height="2" fill="#808080"/><rect x="10" y="24" width="4" height="2" fill="#404040"/><rect x="14" y="24" width="2" height="2" fill="#1a1a1a"/><rect x="16" y="24" width="2" height="2" fill="#c8c8c8"/><rect x="2" y="26" width="2" height="2" fill="#808080"/><rect x="4" y="26" width="10" height="2" fill="#1a1a1a"/><rect x="14" y="26" width="2" height="2" fill="#404040"/><rect x="16" y="26" width="2" height="2" fill="#c8c8c8"/><rect x="4" y="28" width="2" height="2" fill="#ececec"/><rect x="6" y="28" width="10" height="2" fill="#c8c8c8"/><rect x="16" y="28" width="2" height="2" fill="#ececec"/><rect x="6" y="30" width="10" height="2" fill="#ececec"/></symbol><symbol id="arrow" viewBox="0 0 32 32"><rect x="20" y="6" width="2" height="2" fill="#606870"/><rect x="20" y="8" width="2" height="2" fill="#2a4a68"/><rect x="22" y="8" width="2" height="2" fill="#606870"/><rect x="20" y="10" width="2" height="2" fill="#4a6a8a"/><rect x="22" y="10" width="2" height="2" fill="#6a8aa8"/><rect x="24" y="10" width="2" height="2" fill="#606870"/><rect x="4" y="12" width="2" height="2" fill="#ececec"/><rect x="6" y="12" width="2" height="2" fill="#d2d6da"/><rect x="8" y="12" width="2" height="2" fill="#b6bec6"/><rect x="10" y="12" width="2" height="2" fill="#9aa6b2"/><rect x="12" y="12" width="2" height="2" fill="#8090a0"/><rect x="14" y="12" width="2" height="2" fill="#6c7e92"/><rect x="16" y="12" width="2" height="2" fill="#5e728a"/><rect x="18" y="12" width="2" height="2" fill="#546a82"/><rect x="20" y="12" width="2" height="2" fill="#4a6a8a"/><rect x="22" y="12" width="2" height="2" fill="#98b4cc"/><rect x="24" y="12" width="2" height="2" fill="#6a8aa8"/><rect x="26" y="12" width="2" height="2" fill="#606870"/><rect x="4" y="14" width="2" height="2" fill="#f2f2f2"/><rect x="6" y="14" width="2" height="2" fill="#dcdfe3"/><rect x="8" y="14" width="2" height="2" fill="#c8cdd3"/><rect x="10" y="14" width="2" height="2" fill="#b4bdc7"/><rect x="12" y="14" width="2" height="2" fill="#a2afbd"/><rect x="14" y="14" width="2" height="2" fill="#92a3b5"/><rect x="16" y="14" width="2" height="2" fill="#8699ad"/><rect x="18" y="14" width="2" height="2" fill="#7b93ab"/><rect x="20" y="14" width="2" height="2" fill="#7898b4"/><rect x="22" y="14" width="2" height="2" fill="#88a8c0"/><rect x="24" y="14" width="2" height="2" fill="#7898b4"/><rect x="26" y="14" width="2" height="2" fill="#6888a8"/><rect x="28" y="14" width="2" height="2" fill="#606870"/><rect x="4" y="16" width="2" height="2" fill="#f2f2f2"/><rect x="6" y="16" width="2" height="2" fill="#dcdfe3"/><rect x="8" y="16" width="2" height="2" fill="#c8cdd3"/><rect x="10" y="16" width="2" height="2" fill="#b4bdc7"/><rect x="12" y="16" width="2" height="2" fill="#a2afbd"/><rect x="14" y="16" width="2" height="2" fill="#92a3b5"/><rect x="16" y="16" width="2" height="2" fill="#8699ad"/><rect x="18" y="16" width="2" height="2" fill="#7b93ab"/><rect x="20" y="16" width="2" height="2" fill="#7898b4"/><rect x="22" y="16" width="2" height="2" fill="#88a8c0"/><rect x="24" y="16" width="2" height="2" fill="#7898b4"/><rect x="26" y="16" width="2" height="2" fill="#6888a8"/><rect x="28" y="16" width="2" height="2" fill="#606870"/><rect x="4" y="18" width="2" height="2" fill="#ececec"/><rect x="6" y="18" width="2" height="2" fill="#d2d6da"/><rect x="8" y="18" width="2" height="2" fill="#b6bec6"/><rect x="10" y="18" width="2" height="2" fill="#9aa6b2"/><rect x="12" y="18" width="2" height="2" fill="#8090a0"/><rect x="14" y="18" width="2" height="2" fill="#6c7e92"/><rect x="16" y="18" width="2" height="2" fill="#5e728a"/><rect x="18" y="18" width="2" height="2" fill="#546a82"/><rect x="20" y="18" width="2" height="2" fill="#4a6a8a"/><rect x="22" y="18" width="2" height="2" fill="#98b4cc"/><rect x="24" y="18" width="2" height="2" fill="#6a8aa8"/><rect x="26" y="18" width="2" height="2" fill="#606870"/><rect x="20" y="20" width="2" height="2" fill="#4a6a8a"/><rect x="22" y="20" width="2" height="2" fill="#6a8aa8"/><rect x="24" y="20" width="2" height="2" fill="#606870"/><rect x="20" y="22" width="2" height="2" fill="#2a4a68"/><rect x="22" y="22" width="2" height="2" fill="#606870"/><rect x="20" y="24" width="2" height="2" fill="#606870"/></symbol><symbol id="clock" viewBox="0 0 32 32"><rect x="6" y="2" width="2" height="2" fill="#a8ac98"/><rect x="8" y="2" width="2" height="2" fill="#98b840"/><rect x="10" y="2" width="2" height="2" fill="#a8ac98"/><rect x="14" y="2" width="6" height="2" fill="#e8e8e0"/><rect x="22" y="2" width="2" height="2" fill="#a8ac98"/><rect x="24" y="2" width="2" height="2" fill="#98b840"/><rect x="26" y="2" width="2" height="2" fill="#a8ac98"/><rect x="4" y="4" width="2" height="2" fill="#a8ac98"/><rect x="6" y="4" width="2" height="2" fill="#c8e070"/><rect x="8" y="4" width="2" height="2" fill="#a8ac98"/><rect x="10" y="4" width="12" height="2" fill="#a4ac80"/><rect x="22" y="4" width="2" height="2" fill="#a8ac98"/><rect x="24" y="4" width="2" height="2" fill="#c8e070"/><rect x="26" y="4" width="2" height="2" fill="#a8ac98"/><rect x="4" y="6" width="6" height="2" fill="#a8ac98"/><rect x="10" y="6" width="2" height="2" fill="#98b840"/><rect x="12" y="6" width="10" height="2" fill="#c0d868"/><rect x="22" y="6" width="6" height="2" fill="#a8ac98"/><rect x="4" y="8" width="2" height="2" fill="#a8ac98"/><rect x="6" y="8" width="2" height="2" fill="#98b840"/><rect x="8" y="8" width="2" height="2" fill="#c0d868"/><rect x="10" y="8" width="12" height="2" fill="#d4e4a8"/><rect x="22" y="8" width="2" height="2" fill="#c0d868"/><rect x="24" y="8" width="2" height="2" fill="#98b840"/><rect x="26" y="8" width="2" height="2" fill="#a8ac98"/><rect x="4" y="10" width="2" height="2" fill="#a8ac98"/><rect x="6" y="10" width="2" height="2" fill="#98b840"/><rect x="8" y="10" width="2" height="2" fill="#d4e4a8"/><rect x="10" y="10" width="12" height="2" fill="#ffffff"/><rect x="22" y="10" width="2" height="2" fill="#d4e4a8"/><rect x="24" y="10" width="2" height="2" fill="#98b840"/><rect x="26" y="10" width="2" height="2" fill="#a8ac98"/><rect x="2" y="12" width="2" height="2" fill="#a8ac98"/><rect x="4" y="12" width="2" height="2" fill="#98b840"/><rect x="6" y="12" width="2" height="2" fill="#d4e4a8"/><rect x="8" y="12" width="6" height="2" fill="#ffffff"/><rect x="14" y="12" width="2" height="2" fill="#b8cc80"/><rect x="16" y="12" width="8" height="2" fill="#ffffff"/><rect x="24" y="12" width="2" height="2" fill="#d4e4a8"/><rect x="26" y="12" width="2" height="2" fill="#98b840"/><rect x="28" y="12" width="2" height="2" fill="#a8ac98"/><rect x="2" y="14" width="2" height="2" fill="#a8ac98"/><rect x="4" y="14" width="2" height="2" fill="#98b840"/><rect x="6" y="14" width="2" height="2" fill="#d4e4a8"/><rect x="8" y="14" width="6" height="2" fill="#ffffff"/><rect x="14" y="14" width="2" height="2" fill="#b8cc80"/><rect x="16" y="14" width="8" height="2" fill="#ffffff"/><rect x="24" y="14" width="2" height="2" fill="#d4e4a8"/><rect x="26" y="14" width="2" height="2" fill="#98b840"/><rect x="28" y="14" width="2" height="2" fill="#a8ac98"/><rect x="2" y="16" width="2" height="2" fill="#a8ac98"/><rect x="4" y="16" width="2" height="2" fill="#98b840"/><rect x="6" y="16" width="2" height="2" fill="#d4e4a8"/><rect x="8" y="16" width="6" height="2" fill="#ffffff"/><rect x="14" y="16" width="2" height="2" fill="#b8cc80"/><rect x="16" y="16" width="8" height="2" fill="#ffffff"/><rect x="24" y="16" width="2" height="2" fill="#d4e4a8"/><rect x="26" y="16" width="2" height="2" fill="#98b840"/><rect x="28" y="16" width="2" height="2" fill="#a8ac98"/><rect x="2" y="18" width="2" height="2" fill="#a8ac98"/><rect x="4" y="18" width="2" height="2" fill="#98b840"/><rect x="6" y="18" width="2" height="2" fill="#d4e4a8"/><rect x="8" y="18" width="6" height="2" fill="#ffffff"/><rect x="14" y="18" width="2" height="2" fill="#b8cc80"/><rect x="16" y="18" width="2" height="2" fill="#789818"/><rect x="18" y="18" width="2" height="2" fill="#b8cc80"/><rect x="20" y="18" width="4" height="2" fill="#ffffff"/><rect x="24" y="18" width="2" height="2" fill="#d4e4a8"/><rect x="26" y="18" width="2" height="2" fill="#98b840"/><rect x="28" y="18" width="2" height="2" fill="#a8ac98"/><rect x="2" y="20" width="2" height="2" fill="#a8ac98"/><rect x="4" y="20" width="2" height="2" fill="#98b840"/><rect x="6" y="20" width="2" height="2" fill="#d4e4a8"/><rect x="8" y="20" width="8" height="2" fill="#ffffff"/><rect x="16" y="20" width="4" height="2" fill="#b8cc80"/><rect x="20" y="20" width="4" height="2" fill="#ffffff"/><rect x="24" y="20" width="2" height="2" fill="#d4e4a8"/><rect x="26" y="20" width="2" height="2" fill="#98b840"/><rect x="28" y="20" width="2" height="2" fill="#a8ac98"/><rect x="4" y="22" width="2" height="2" fill="#a8ac98"/><rect x="6" y="22" width="2" height="2" fill="#80a020"/><rect x="8" y="22" width="2" height="2" fill="#d4e4a8"/><rect x="10" y="22" width="12" height="2" fill="#ffffff"/><rect x="22" y="22" width="2" height="2" fill="#d4e4a8"/><rect x="24" y="22" width="2" height="2" fill="#80a020"/><rect x="26" y="22" width="2" height="2" fill="#a8ac98"/><rect x="4" y="24" width="2" height="2" fill="#e8e8e0"/><rect x="6" y="24" width="4" height="2" fill="#80a020"/><rect x="10" y="24" width="12" height="2" fill="#d4e4a8"/><rect x="22" y="24" width="4" height="2" fill="#80a020"/><rect x="26" y="24" width="2" height="2" fill="#e8e8e0"/><rect x="6" y="26" width="2" height="2" fill="#e8e8e0"/><rect x="8" y="26" width="2" height="2" fill="#80a020"/><rect x="10" y="26" width="12" height="2" fill="#88a040"/><rect x="22" y="26" width="2" height="2" fill="#80a020"/><rect x="24" y="26" width="2" height="2" fill="#e8e8e0"/><rect x="10" y="28" width="2" height="2" fill="#a8ac98"/><rect x="12" y="28" width="10" height="2" fill="#88a040"/><rect x="22" y="28" width="2" height="2" fill="#a8ac98"/><rect x="12" y="30" width="10" height="2" fill="#a8ac98"/></symbol><symbol id="repeat" viewBox="0 0 32 32"><rect x="4" y="4" width="4" height="2" fill="#9c9c9c"/><rect x="10" y="4" width="2" height="2" fill="#9c9c9c"/><rect x="12" y="4" width="8" height="2" fill="#000000"/><rect x="20" y="4" width="2" height="2" fill="#9c9c9c"/><rect x="22" y="4" width="2" height="2" fill="#dedede"/><rect x="4" y="6" width="20" height="2" fill="#000000"/><rect x="24" y="6" width="2" height="2" fill="#9c9c9c"/><rect x="4" y="8" width="22" height="2" fill="#000000"/><rect x="26" y="8" width="2" height="2" fill="#9c9c9c"/><rect x="2" y="10" width="2" height="2" fill="#dedede"/><rect x="4" y="10" width="10" height="2" fill="#000000"/><rect x="14" y="10" width="2" height="2" fill="#9c9c9c"/><rect x="18" y="10" width="2" height="2" fill="#9c9c9c"/><rect x="20" y="10" width="8" height="2" fill="#000000"/><rect x="28" y="10" width="2" height="2" fill="#dedede"/><rect x="2" y="12" width="2" height="2" fill="#9c9c9c"/><rect x="4" y="12" width="10" height="2" fill="#000000"/><rect x="14" y="12" width="2" height="2" fill="#9c9c9c"/><rect x="20" y="12" width="2" height="2" fill="#9c9c9c"/><rect x="22" y="12" width="6" height="2" fill="#000000"/><rect x="28" y="12" width="2" height="2" fill="#9c9c9c"/><rect x="2" y="14" width="2" height="2" fill="#9c9c9c"/><rect x="4" y="14" width="10" height="2" fill="#000000"/><rect x="14" y="14" width="2" height="2" fill="#9c9c9c"/><rect x="22" y="14" width="6" height="2" fill="#000000"/><rect x="28" y="14" width="2" height="2" fill="#9c9c9c"/><rect x="2" y="16" width="6" height="2" fill="#dedede"/><rect x="22" y="16" width="6" height="2" fill="#000000"/><rect x="28" y="16" width="2" height="2" fill="#9c9c9c"/><rect x="4" y="18" width="2" height="2" fill="#dedede"/><rect x="6" y="18" width="2" height="2" fill="#9c9c9c"/><rect x="8" y="18" width="4" height="2" fill="#000000"/><rect x="20" y="18" width="2" height="2" fill="#9c9c9c"/><rect x="22" y="18" width="6" height="2" fill="#000000"/><rect x="28" y="18" width="2" height="2" fill="#9c9c9c"/><rect x="4" y="20" width="2" height="2" fill="#dedede"/><rect x="6" y="20" width="6" height="2" fill="#000000"/><rect x="12" y="20" width="2" height="2" fill="#9c9c9c"/><rect x="18" y="20" width="2" height="2" fill="#9c9c9c"/><rect x="20" y="20" width="6" height="2" fill="#000000"/><rect x="26" y="20" width="2" height="2" fill="#9c9c9c"/><rect x="28" y="20" width="2" height="2" fill="#dedede"/><rect x="6" y="22" width="20" height="2" fill="#000000"/><rect x="26" y="22" width="2" height="2" fill="#9c9c9c"/><rect x="6" y="24" width="2" height="2" fill="#dedede"/><rect x="8" y="24" width="16" height="2" fill="#000000"/><rect x="24" y="24" width="2" height="2" fill="#9c9c9c"/><rect x="8" y="26" width="2" height="2" fill="#dedede"/><rect x="10" y="26" width="2" height="2" fill="#9c9c9c"/><rect x="12" y="26" width="10" height="2" fill="#000000"/><rect x="22" y="26" width="2" height="2" fill="#9c9c9c"/><rect x="24" y="26" width="2" height="2" fill="#dedede"/></symbol><symbol id="repeat14" viewBox="0 0 32 32"><rect x="4" y="4" width="4" height="2" fill="#9c9c9c"/><rect x="10" y="4" width="2" height="2" fill="#9c9c9c"/><rect x="12" y="4" width="8" height="2" fill="#000000"/><rect x="20" y="4" width="2" height="2" fill="#9c9c9c"/><rect x="22" y="4" width="2" height="2" fill="#dedede"/><rect x="4" y="6" width="20" height="2" fill="#000000"/><rect x="24" y="6" width="2" height="2" fill="#9c9c9c"/><rect x="4" y="8" width="22" height="2" fill="#000000"/><rect x="26" y="8" width="2" height="2" fill="#9c9c9c"/><rect x="2" y="10" width="2" height="2" fill="#dedede"/><rect x="4" y="10" width="10" height="2" fill="#000000"/><rect x="14" y="10" width="2" height="2" fill="#9c9c9c"/><rect x="18" y="10" width="2" height="2" fill="#9c9c9c"/><rect x="20" y="10" width="8" height="2" fill="#000000"/><rect x="28" y="10" width="2" height="2" fill="#dedede"/><rect x="2" y="12" width="2" height="2" fill="#9c9c9c"/><rect x="4" y="12" width="10" height="2" fill="#000000"/><rect x="14" y="12" width="2" height="2" fill="#9c9c9c"/><rect x="20" y="12" width="2" height="2" fill="#9c9c9c"/><rect x="22" y="12" width="6" height="2" fill="#000000"/><rect x="28" y="12" width="2" height="2" fill="#9c9c9c"/><rect x="2" y="14" width="2" height="2" fill="#9c9c9c"/><rect x="4" y="14" width="10" height="2" fill="#000000"/><rect x="14" y="14" width="2" height="2" fill="#9c9c9c"/><rect x="18" y="14" width="2" height="2" fill="#8aa4b0"/><rect x="20" y="14" width="10" height="2" fill="#4a98b0"/><rect x="30" y="14" width="2" height="2" fill="#8aa4b0"/><rect x="2" y="16" width="6" height="2" fill="#dedede"/><rect x="18" y="16" width="2" height="2" fill="#8aa4b0"/><rect x="20" y="16" width="10" height="2" fill="#c8f8fc"/><rect x="30" y="16" width="2" height="2" fill="#8aa4b0"/><rect x="4" y="18" width="2" height="2" fill="#dedede"/><rect x="6" y="18" width="2" height="2" fill="#9c9c9c"/><rect x="8" y="18" width="4" height="2" fill="#000000"/><rect x="18" y="18" width="2" height="2" fill="#dedede"/><rect x="20" y="18" width="2" height="2" fill="#f4f4f4"/><rect x="22" y="18" width="4" height="2" fill="#40b8e8"/><rect x="26" y="18" width="2" height="2" fill="#c8f8fc"/><rect x="28" y="18" width="2" height="2" fill="#8a8070"/><rect x="4" y="20" width="2" height="2" fill="#dedede"/><rect x="6" y="20" width="6" height="2" fill="#000000"/><rect x="12" y="20" width="2" height="2" fill="#9c9c9c"/><rect x="18" y="20" width="2" height="2" fill="#8a8070"/><rect x="20" y="20" width="2" height="2" fill="#000000"/><rect x="22" y="20" width="4" height="2" fill="#90d0e8"/><rect x="26" y="20" width="2" height="2" fill="#8a8070"/><rect x="6" y="22" width="16" height="2" fill="#000000"/><rect x="22" y="22" width="2" height="2" fill="#8a8070"/><rect x="24" y="22" width="2" height="2" fill="#dedede"/><rect x="26" y="22" width="2" height="2" fill="#9c9c9c"/><rect x="8" y="24" width="2" height="2" fill="#9c9c9c"/><rect x="10" y="24" width="12" height="2" fill="#000000"/><rect x="26" y="24" width="2" height="2" fill="#9c9c9c"/><rect x="10" y="26" width="2" height="2" fill="#9c9c9c"/><rect x="12" y="26" width="8" height="2" fill="#000000"/><rect x="22" y="26" width="4" height="2" fill="#50c0e0"/><rect x="26" y="26" width="2" height="2" fill="#f4f4f4"/><rect x="28" y="26" width="2" height="2" fill="#8a8070"/><rect x="18" y="28" width="2" height="2" fill="#8aa4b0"/><rect x="20" y="28" width="10" height="2" fill="#40a8f0"/><rect x="30" y="28" width="2" height="2" fill="#8aa4b0"/><rect x="18" y="30" width="2" height="2" fill="#8aa4b0"/><rect x="20" y="30" width="10" height="2" fill="#3c94d8"/><rect x="30" y="30" width="2" height="2" fill="#8aa4b0"/></symbol><symbol id="bullet" viewBox="0 0 32 32"><rect x="4" y="10" width="2" height="2" fill="#c8c890"/><rect x="6" y="10" width="12" height="2" fill="#a8a030"/><rect x="18" y="10" width="2" height="2" fill="#d0d0c8"/><rect x="20" y="10" width="2" height="2" fill="#ececec"/><rect x="4" y="12" width="2" height="2" fill="#b8b830"/><rect x="6" y="12" width="2" height="2" fill="#707010"/><rect x="8" y="12" width="10" height="2" fill="#000000"/><rect x="18" y="12" width="2" height="2" fill="#b8b830"/><rect x="20" y="12" width="2" height="2" fill="#dcdc30"/><rect x="22" y="12" width="2" height="2" fill="#d0d0c8"/><rect x="24" y="12" width="2" height="2" fill="#ececec"/><rect x="4" y="14" width="2" height="2" fill="#b8b830"/><rect x="6" y="14" width="2" height="2" fill="#707010"/><rect x="8" y="14" width="12" height="2" fill="#000000"/><rect x="20" y="14" width="2" height="2" fill="#707010"/><rect x="22" y="14" width="2" height="2" fill="#dcdc30"/><rect x="24" y="14" width="2" height="2" fill="#c8c890"/><rect x="4" y="16" width="2" height="2" fill="#b8b830"/><rect x="6" y="16" width="2" height="2" fill="#707010"/><rect x="8" y="16" width="12" height="2" fill="#000000"/><rect x="20" y="16" width="2" height="2" fill="#707010"/><rect x="22" y="16" width="2" height="2" fill="#dcdc30"/><rect x="24" y="16" width="2" height="2" fill="#c8c890"/><rect x="4" y="18" width="2" height="2" fill="#b8b830"/><rect x="6" y="18" width="2" height="2" fill="#787860"/><rect x="8" y="18" width="2" height="2" fill="#606878"/><rect x="10" y="18" width="10" height="2" fill="#787860"/><rect x="20" y="18" width="2" height="2" fill="#b8b830"/><rect x="22" y="18" width="2" height="2" fill="#dcdc30"/><rect x="24" y="18" width="2" height="2" fill="#d0d0c8"/><rect x="26" y="18" width="2" height="2" fill="#ececec"/><rect x="4" y="20" width="18" height="2" fill="#c8c8b0"/><rect x="22" y="20" width="2" height="2" fill="#ececec"/><rect x="4" y="22" width="18" height="2" fill="#ececec"/></symbol><symbol id="hglass" viewBox="0 0 32 32"><rect x="4" y="0" width="2" height="2" fill="#4a9cbc"/><rect x="6" y="0" width="20" height="2" fill="#5cc0e0"/><rect x="26" y="0" width="2" height="2" fill="#4a9cbc"/><rect x="4" y="2" width="2" height="2" fill="#4a9cbc"/><rect x="6" y="2" width="20" height="2" fill="#7ad8f4"/><rect x="26" y="2" width="2" height="2" fill="#4a9cbc"/><rect x="6" y="4" width="2" height="2" fill="#9a9a9a"/><rect x="24" y="4" width="2" height="2" fill="#9a9a9a"/><rect x="26" y="4" width="2" height="2" fill="#ececec"/><rect x="6" y="6" width="2" height="2" fill="#9a9a9a"/><rect x="10" y="6" width="2" height="2" fill="#d8f4fc"/><rect x="12" y="6" width="10" height="2" fill="#a8dcf0"/><rect x="24" y="6" width="2" height="2" fill="#9a9a9a"/><rect x="26" y="6" width="2" height="2" fill="#ececec"/><rect x="6" y="8" width="2" height="2" fill="#7a7a7a"/><rect x="8" y="8" width="2" height="2" fill="#ececec"/><rect x="10" y="8" width="2" height="2" fill="#d8f4fc"/><rect x="12" y="8" width="10" height="2" fill="#40b8e8"/><rect x="24" y="8" width="2" height="2" fill="#7a7a7a"/><rect x="26" y="8" width="2" height="2" fill="#ececec"/><rect x="8" y="10" width="2" height="2" fill="#7a7a7a"/><rect x="10" y="10" width="2" height="2" fill="#ececec"/><rect x="14" y="10" width="4" height="2" fill="#40b8e8"/><rect x="18" y="10" width="2" height="2" fill="#68c8ec"/><rect x="22" y="10" width="2" height="2" fill="#7a7a7a"/><rect x="24" y="10" width="2" height="2" fill="#ececec"/><rect x="10" y="12" width="2" height="2" fill="#7a7a7a"/><rect x="12" y="12" width="2" height="2" fill="#ececec"/><rect x="14" y="12" width="2" height="2" fill="#d8f4fc"/><rect x="16" y="12" width="2" height="2" fill="#a8dcf0"/><rect x="20" y="12" width="2" height="2" fill="#7a7a7a"/><rect x="22" y="12" width="2" height="2" fill="#ececec"/><rect x="12" y="14" width="4" height="2" fill="#9a9a9a"/><rect x="18" y="14" width="2" height="2" fill="#7a7a7a"/><rect x="20" y="14" width="2" height="2" fill="#ececec"/><rect x="12" y="16" width="4" height="2" fill="#9a9a9a"/><rect x="18" y="16" width="2" height="2" fill="#7a7a7a"/><rect x="20" y="16" width="2" height="2" fill="#ececec"/><rect x="10" y="18" width="2" height="2" fill="#7a7a7a"/><rect x="12" y="18" width="2" height="2" fill="#9a9a9a"/><rect x="14" y="18" width="4" height="2" fill="#ececec"/><rect x="20" y="18" width="2" height="2" fill="#7a7a7a"/><rect x="22" y="18" width="2" height="2" fill="#ececec"/><rect x="8" y="20" width="2" height="2" fill="#7a7a7a"/><rect x="10" y="20" width="2" height="2" fill="#ececec"/><rect x="14" y="20" width="6" height="2" fill="#ececec"/><rect x="22" y="20" width="2" height="2" fill="#7a7a7a"/><rect x="24" y="20" width="2" height="2" fill="#ececec"/><rect x="6" y="22" width="2" height="2" fill="#7a7a7a"/><rect x="8" y="22" width="2" height="2" fill="#9a9a9a"/><rect x="12" y="22" width="2" height="2" fill="#ececec"/><rect x="14" y="22" width="6" height="2" fill="#68c8ec"/><rect x="20" y="22" width="2" height="2" fill="#ececec"/><rect x="24" y="22" width="2" height="2" fill="#7a7a7a"/><rect x="26" y="22" width="2" height="2" fill="#ececec"/><rect x="6" y="24" width="2" height="2" fill="#9a9a9a"/><rect x="8" y="24" width="2" height="2" fill="#ececec"/><rect x="10" y="24" width="2" height="2" fill="#d8f4fc"/><rect x="12" y="24" width="8" height="2" fill="#48bce8"/><rect x="20" y="24" width="2" height="2" fill="#a8dcf0"/><rect x="24" y="24" width="2" height="2" fill="#9a9a9a"/><rect x="26" y="24" width="2" height="2" fill="#ececec"/><rect x="6" y="26" width="2" height="2" fill="#9a9a9a"/><rect x="8" y="26" width="2" height="2" fill="#d8f4fc"/><rect x="10" y="26" width="2" height="2" fill="#a8dcf0"/><rect x="12" y="26" width="10" height="2" fill="#68c8ec"/><rect x="22" y="26" width="2" height="2" fill="#a8dcf0"/><rect x="24" y="26" width="2" height="2" fill="#9a9a9a"/><rect x="26" y="26" width="2" height="2" fill="#ececec"/><rect x="4" y="28" width="2" height="2" fill="#4888c8"/><rect x="6" y="28" width="20" height="2" fill="#40a0f0"/><rect x="26" y="28" width="2" height="2" fill="#4888c8"/><rect x="4" y="30" width="2" height="2" fill="#4888c8"/><rect x="6" y="30" width="20" height="2" fill="#3898e0"/><rect x="26" y="30" width="2" height="2" fill="#4888c8"/></symbol><symbol id="house2" viewBox="0 0 32 32"><rect x="8" y="2" width="4" height="2" fill="#000000"/><rect x="12" y="2" width="2" height="2" fill="#505050"/><rect x="6" y="4" width="4" height="2" fill="#000000"/><rect x="10" y="4" width="2" height="2" fill="#505050"/><rect x="12" y="4" width="6" height="2" fill="#000000"/><rect x="18" y="4" width="2" height="2" fill="#505050"/><rect x="2" y="6" width="2" height="2" fill="#505050"/><rect x="4" y="6" width="2" height="2" fill="#000000"/><rect x="6" y="6" width="4" height="2" fill="#505050"/><rect x="10" y="6" width="2" height="2" fill="#000000"/><rect x="12" y="6" width="2" height="2" fill="#505050"/><rect x="14" y="6" width="4" height="2" fill="#000000"/><rect x="18" y="6" width="2" height="2" fill="#505050"/><rect x="0" y="8" width="2" height="2" fill="#505050"/><rect x="2" y="8" width="2" height="2" fill="#000000"/><rect x="4" y="8" width="2" height="2" fill="#505050"/><rect x="6" y="8" width="8" height="2" fill="#000000"/><rect x="14" y="8" width="4" height="2" fill="#505050"/><rect x="18" y="8" width="2" height="2" fill="#000000"/><rect x="20" y="8" width="2" height="2" fill="#505050"/><rect x="0" y="10" width="2" height="2" fill="#000000"/><rect x="2" y="10" width="2" height="2" fill="#505050"/><rect x="4" y="10" width="14" height="2" fill="#000000"/><rect x="18" y="10" width="4" height="2" fill="#505050"/><rect x="2" y="12" width="16" height="2" fill="#000000"/><rect x="18" y="12" width="2" height="2" fill="#505050"/><rect x="20" y="12" width="2" height="2" fill="#909090"/><rect x="22" y="12" width="2" height="2" fill="#e0e0e0"/><rect x="2" y="14" width="6" height="2" fill="#000000"/><rect x="8" y="14" width="4" height="2" fill="#505050"/><rect x="12" y="14" width="14" height="2" fill="#000000"/><rect x="26" y="14" width="2" height="2" fill="#505050"/><rect x="2" y="16" width="6" height="2" fill="#000000"/><rect x="8" y="16" width="2" height="2" fill="#505050"/><rect x="12" y="16" width="6" height="2" fill="#000000"/><rect x="18" y="16" width="6" height="2" fill="#505050"/><rect x="24" y="16" width="4" height="2" fill="#000000"/><rect x="2" y="18" width="6" height="2" fill="#000000"/><rect x="8" y="18" width="2" height="2" fill="#505050"/><rect x="12" y="18" width="4" height="2" fill="#000000"/><rect x="16" y="18" width="2" height="2" fill="#505050"/><rect x="18" y="18" width="6" height="2" fill="#000000"/><rect x="24" y="18" width="2" height="2" fill="#505050"/><rect x="26" y="18" width="2" height="2" fill="#000000"/><rect x="28" y="18" width="2" height="2" fill="#505050"/><rect x="2" y="20" width="2" height="2" fill="#505050"/><rect x="4" y="20" width="4" height="2" fill="#000000"/><rect x="8" y="20" width="2" height="2" fill="#505050"/><rect x="10" y="20" width="4" height="2" fill="#000000"/><rect x="14" y="20" width="2" height="2" fill="#505050"/><rect x="16" y="20" width="8" height="2" fill="#000000"/><rect x="24" y="20" width="4" height="2" fill="#505050"/><rect x="28" y="20" width="2" height="2" fill="#000000"/><rect x="10" y="22" width="4" height="2" fill="#505050"/><rect x="14" y="22" width="12" height="2" fill="#000000"/><rect x="26" y="22" width="4" height="2" fill="#505050"/><rect x="12" y="24" width="2" height="2" fill="#505050"/><rect x="14" y="24" width="14" height="2" fill="#000000"/><rect x="12" y="26" width="2" height="2" fill="#505050"/><rect x="14" y="26" width="4" height="2" fill="#000000"/><rect x="18" y="26" width="2" height="2" fill="#505050"/><rect x="22" y="26" width="2" height="2" fill="#505050"/><rect x="24" y="26" width="4" height="2" fill="#000000"/><rect x="12" y="28" width="2" height="2" fill="#505050"/><rect x="14" y="28" width="4" height="2" fill="#000000"/><rect x="18" y="28" width="2" height="2" fill="#505050"/><rect x="22" y="28" width="2" height="2" fill="#505050"/><rect x="24" y="28" width="4" height="2" fill="#000000"/><rect x="12" y="30" width="2" height="2" fill="#e0e0e0"/><rect x="14" y="30" width="6" height="2" fill="#000000"/><rect x="22" y="30" width="2" height="2" fill="#505050"/><rect x="24" y="30" width="4" height="2" fill="#000000"/><rect x="28" y="30" width="2" height="2" fill="#e0e0e0"/></symbol><symbol id="house" viewBox="0 0 32 32"><rect x="12" y="4" width="2" height="2" fill="#e0e0e0"/><rect x="14" y="4" width="4" height="2" fill="#000000"/><rect x="18" y="4" width="2" height="2" fill="#e0e0e0"/><rect x="12" y="6" width="2" height="2" fill="#505050"/><rect x="14" y="6" width="4" height="2" fill="#000000"/><rect x="18" y="6" width="2" height="2" fill="#505050"/><rect x="10" y="8" width="4" height="2" fill="#000000"/><rect x="14" y="8" width="4" height="2" fill="#e4e4e4"/><rect x="18" y="8" width="6" height="2" fill="#000000"/><rect x="24" y="8" width="2" height="2" fill="#e0e0e0"/><rect x="6" y="10" width="2" height="2" fill="#505050"/><rect x="8" y="10" width="2" height="2" fill="#000000"/><rect x="10" y="10" width="2" height="2" fill="#505050"/><rect x="12" y="10" width="2" height="2" fill="#e4e4e4"/><rect x="14" y="10" width="4" height="2" fill="#000000"/><rect x="18" y="10" width="2" height="2" fill="#e4e4e4"/><rect x="20" y="10" width="2" height="2" fill="#505050"/><rect x="22" y="10" width="4" height="2" fill="#000000"/><rect x="26" y="10" width="2" height="2" fill="#505050"/><rect x="4" y="12" width="2" height="2" fill="#505050"/><rect x="6" y="12" width="2" height="2" fill="#000000"/><rect x="8" y="12" width="4" height="2" fill="#909090"/><rect x="12" y="12" width="8" height="2" fill="#000000"/><rect x="20" y="12" width="4" height="2" fill="#909090"/><rect x="24" y="12" width="2" height="2" fill="#000000"/><rect x="26" y="12" width="2" height="2" fill="#505050"/><rect x="0" y="14" width="2" height="2" fill="#505050"/><rect x="2" y="14" width="4" height="2" fill="#000000"/><rect x="6" y="14" width="2" height="2" fill="#e4e4e4"/><rect x="8" y="14" width="2" height="2" fill="#505050"/><rect x="10" y="14" width="12" height="2" fill="#000000"/><rect x="22" y="14" width="2" height="2" fill="#505050"/><rect x="24" y="14" width="2" height="2" fill="#e4e4e4"/><rect x="26" y="14" width="4" height="2" fill="#000000"/><rect x="30" y="14" width="2" height="2" fill="#505050"/><rect x="0" y="16" width="4" height="2" fill="#909090"/><rect x="4" y="16" width="2" height="2" fill="#e4e4e4"/><rect x="6" y="16" width="20" height="2" fill="#000000"/><rect x="26" y="16" width="2" height="2" fill="#e4e4e4"/><rect x="28" y="16" width="4" height="2" fill="#909090"/><rect x="4" y="18" width="2" height="2" fill="#909090"/><rect x="6" y="18" width="20" height="2" fill="#000000"/><rect x="26" y="18" width="2" height="2" fill="#909090"/><rect x="4" y="20" width="2" height="2" fill="#909090"/><rect x="6" y="20" width="8" height="2" fill="#000000"/><rect x="14" y="20" width="4" height="2" fill="#505050"/><rect x="18" y="20" width="8" height="2" fill="#000000"/><rect x="26" y="20" width="2" height="2" fill="#909090"/><rect x="4" y="22" width="2" height="2" fill="#909090"/><rect x="6" y="22" width="6" height="2" fill="#000000"/><rect x="12" y="22" width="2" height="2" fill="#505050"/><rect x="18" y="22" width="2" height="2" fill="#505050"/><rect x="20" y="22" width="6" height="2" fill="#000000"/><rect x="26" y="22" width="2" height="2" fill="#909090"/><rect x="4" y="24" width="2" height="2" fill="#909090"/><rect x="6" y="24" width="6" height="2" fill="#000000"/><rect x="12" y="24" width="2" height="2" fill="#505050"/><rect x="18" y="24" width="2" height="2" fill="#505050"/><rect x="20" y="24" width="6" height="2" fill="#000000"/><rect x="26" y="24" width="2" height="2" fill="#909090"/><rect x="4" y="26" width="2" height="2" fill="#909090"/><rect x="6" y="26" width="6" height="2" fill="#000000"/><rect x="12" y="26" width="2" height="2" fill="#505050"/><rect x="18" y="26" width="2" height="2" fill="#505050"/><rect x="20" y="26" width="6" height="2" fill="#000000"/><rect x="26" y="26" width="2" height="2" fill="#909090"/><rect x="4" y="28" width="2" height="2" fill="#909090"/><rect x="6" y="28" width="6" height="2" fill="#000000"/><rect x="12" y="28" width="2" height="2" fill="#505050"/><rect x="18" y="28" width="2" height="2" fill="#505050"/><rect x="20" y="28" width="6" height="2" fill="#000000"/><rect x="26" y="28" width="2" height="2" fill="#909090"/><rect x="6" y="30" width="6" height="2" fill="#000000"/><rect x="12" y="30" width="2" height="2" fill="#505050"/><rect x="18" y="30" width="2" height="2" fill="#505050"/><rect x="20" y="30" width="6" height="2" fill="#000000"/></symbol><symbol id="ofold" viewBox="0 0 32 32"><rect x="2" y="0" width="8" height="2" fill="#b8a488"/><rect x="2" y="2" width="2" height="2" fill="#b8a488"/><rect x="4" y="2" width="6" height="2" fill="#dcb070"/><rect x="10" y="2" width="2" height="2" fill="#c8c8c8"/><rect x="2" y="4" width="2" height="2" fill="#b8a488"/><rect x="4" y="4" width="6" height="2" fill="#fcc878"/><rect x="10" y="4" width="18" height="2" fill="#c09860"/><rect x="28" y="4" width="2" height="2" fill="#b8a488"/><rect x="2" y="6" width="2" height="2" fill="#b8a488"/><rect x="4" y="6" width="24" height="2" fill="#fcc878"/><rect x="28" y="6" width="2" height="2" fill="#b8a488"/><rect x="2" y="8" width="2" height="2" fill="#b8a488"/><rect x="4" y="8" width="24" height="2" fill="#f6bc78"/><rect x="28" y="8" width="2" height="2" fill="#b8a488"/><rect x="0" y="10" width="2" height="2" fill="#b87060"/><rect x="2" y="10" width="28" height="2" fill="#e06a20"/><rect x="30" y="10" width="2" height="2" fill="#b87060"/><rect x="0" y="12" width="2" height="2" fill="#c09860"/><rect x="2" y="12" width="28" height="2" fill="#f0a818"/><rect x="30" y="12" width="2" height="2" fill="#c09860"/><rect x="0" y="14" width="2" height="2" fill="#c09860"/><rect x="2" y="14" width="28" height="2" fill="#f4a020"/><rect x="30" y="14" width="2" height="2" fill="#c09860"/><rect x="0" y="16" width="2" height="2" fill="#c09860"/><rect x="2" y="16" width="28" height="2" fill="#f4a020"/><rect x="30" y="16" width="2" height="2" fill="#c09860"/><rect x="0" y="18" width="2" height="2" fill="#c09860"/><rect x="2" y="18" width="28" height="2" fill="#f4a020"/><rect x="30" y="18" width="2" height="2" fill="#c09860"/><rect x="0" y="20" width="2" height="2" fill="#c09860"/><rect x="2" y="20" width="28" height="2" fill="#f4a020"/><rect x="30" y="20" width="2" height="2" fill="#c09860"/><rect x="0" y="22" width="2" height="2" fill="#c09860"/><rect x="2" y="22" width="28" height="2" fill="#fcc468"/><rect x="30" y="22" width="2" height="2" fill="#c09860"/><rect x="0" y="24" width="2" height="2" fill="#c09860"/><rect x="2" y="24" width="28" height="2" fill="#d8aa68"/><rect x="30" y="24" width="2" height="2" fill="#c09860"/><rect x="2" y="26" width="28" height="2" fill="#acacac"/></symbol><symbol id="fold" viewBox="0 0 32 32"><rect x="2" y="2" width="10" height="2" fill="#8c8c86"/><rect x="2" y="4" width="2" height="2" fill="#9a9a94"/><rect x="4" y="4" width="8" height="2" fill="#a4a690"/><rect x="12" y="4" width="2" height="2" fill="#76786a"/><rect x="14" y="4" width="2" height="2" fill="#e6e6e6"/><rect x="2" y="6" width="2" height="2" fill="#9a9a94"/><rect x="4" y="6" width="10" height="2" fill="#8e907a"/><rect x="14" y="6" width="14" height="2" fill="#7e8070"/><rect x="28" y="6" width="2" height="2" fill="#76786a"/><rect x="2" y="8" width="2" height="2" fill="#9a9a94"/><rect x="4" y="8" width="24" height="2" fill="#8e907a"/><rect x="28" y="8" width="2" height="2" fill="#76786a"/><rect x="2" y="10" width="2" height="2" fill="#9a9a94"/><rect x="4" y="10" width="24" height="2" fill="#8e907a"/><rect x="28" y="10" width="2" height="2" fill="#76786a"/><rect x="2" y="12" width="2" height="2" fill="#9a9a94"/><rect x="4" y="12" width="10" height="2" fill="#76786a"/><rect x="14" y="12" width="14" height="2" fill="#8e907a"/><rect x="28" y="12" width="2" height="2" fill="#76786a"/><rect x="2" y="14" width="12" height="2" fill="#84867a"/><rect x="14" y="14" width="16" height="2" fill="#c8cab4"/><rect x="30" y="14" width="2" height="2" fill="#a8aa96"/><rect x="2" y="16" width="28" height="2" fill="#bcbea8"/><rect x="30" y="16" width="2" height="2" fill="#a8aa96"/><rect x="2" y="18" width="2" height="2" fill="#a8aa96"/><rect x="4" y="18" width="24" height="2" fill="#bcbea8"/><rect x="28" y="18" width="4" height="2" fill="#a8aa96"/><rect x="2" y="20" width="2" height="2" fill="#a8aa96"/><rect x="4" y="20" width="24" height="2" fill="#bcbea8"/><rect x="28" y="20" width="4" height="2" fill="#a8aa96"/><rect x="2" y="22" width="2" height="2" fill="#a8aa96"/><rect x="4" y="22" width="24" height="2" fill="#bcbea8"/><rect x="28" y="22" width="4" height="2" fill="#a8aa96"/><rect x="2" y="24" width="2" height="2" fill="#a8aa96"/><rect x="4" y="24" width="24" height="2" fill="#bcbea8"/><rect x="28" y="24" width="4" height="2" fill="#a8aa96"/><rect x="2" y="26" width="28" height="2" fill="#6c6e66"/><rect x="30" y="26" width="2" height="2" fill="#e6e6e6"/><rect x="4" y="28" width="26" height="2" fill="#e6e6e6"/></symbol>
















<symbol id="music" viewBox="0 0 32 32">
 <path d="M1 1h18l6 6v22H1z" fill="#eef0f2" stroke="#bdbdbd" stroke-width="2"/>
 <path d="M19 1v6h6" fill="#fafafa" stroke="#d4d4d4" stroke-width="1.6"/>
 <rect x="26" y="7" width="2" height="22" fill="#e2e2e2"/>
 <rect x="2" y="29" width="24" height="2" fill="#d8d8d8"/>
 <path d="M11.5 26l7-6.5v13z" fill="#3a9ad8"/>
 <path d="M31.5 26l-7-6.5v13z" fill="#3a9ad8"/>
 <path d="M13 26l4-3.5v7zM30 26l-4-3.5v7z" fill="#5cb6ec"/>
</symbol>
<symbol id="bgimg" viewBox="0 0 32 32">
 <linearGradient id="gSky2" x1="0" y1="0" x2="0" y2="1"><stop offset="0" stop-color="#1c56e6"/><stop offset="0.6" stop-color="#3a78ee"/><stop offset="1" stop-color="#a6c4f6"/></linearGradient>
 <linearGradient id="gGrass" x1="0" y1="0" x2="0" y2="1"><stop offset="0" stop-color="#70a820"/><stop offset="0.35" stop-color="#5a9018"/><stop offset="0.55" stop-color="#2e4a14"/><stop offset="1" stop-color="#1e3a0c"/></linearGradient>
 <rect x="0" y="0" width="32" height="17" fill="url(#gSky2)"/>
 <path d="M14 1h6v4h-6zM2 6h4v2H2zM0 10h4v3H0zM14 10h4v3h-4zM26 8h6v2h-6zM24 11h8v3h-8z" fill="#c0d4f8" opacity="0.75"/>
 <rect x="0" y="16" width="32" height="2" fill="#90ac90"/>
 <rect x="0" y="18" width="32" height="14" fill="url(#gGrass)"/>
</symbol>
<symbol id="dome" viewBox="0 0 32 32">
 <circle cx="16" cy="16" r="14" fill="#6aaee0" stroke="#4a86b8" stroke-width="2"/>
 <ellipse cx="16" cy="9" rx="9" ry="4" fill="#b8dcf4"/>
</symbol>
<symbol id="exm" viewBox="0 0 18 18">
 <rect x="1" y="1" width="16" height="16" fill="url(#gExp)" stroke="#8a8a8a" stroke-width="2"/>
 <path d="M4 9h10" stroke="#3050a0" stroke-width="2"/>
</symbol>
<symbol id="exp" viewBox="0 0 18 18">
 <rect x="1" y="1" width="16" height="16" fill="url(#gExp)" stroke="#8a8a8a" stroke-width="2"/>
 <path d="M4 9h10M9 4v10" stroke="#3050a0" stroke-width="2"/>
</symbol>
<symbol id="err" viewBox="0 0 32 32">
 <circle cx="16" cy="16" r="15" fill="url(#gErr)"/>
 <rect x="7" y="13.5" width="18" height="4" fill="#fff" opacity="0.92"/>
</symbol>
<symbol id="chev" viewBox="0 0 18 10">
 <path d="M1 1l8 7.5 8-7.5" fill="none" stroke="currentColor" stroke-width="2"/>
</symbol>
</defs>
</svg>

<svg width="0" height="0" style="position:absolute">
<defs>
<linearGradient id="gPage" x1="0" y1="0" x2="1" y2="1"><stop offset="0" stop-color="#e4e4e4"/><stop offset="1" stop-color="#fafafa"/></linearGradient>
<linearGradient id="gGreen" x1="0" y1="0" x2="0" y2="1"><stop offset="0" stop-color="#5cd65c"/><stop offset="1" stop-color="#14a814"/></linearGradient>
<linearGradient id="gOrange" x1="0" y1="0" x2="1" y2="1"><stop offset="0" stop-color="#ffb070"/><stop offset="1" stop-color="#f06a10"/></linearGradient>
<linearGradient id="gLime" x1="0" y1="0" x2="1" y2="1"><stop offset="0" stop-color="#a8e060"/><stop offset="1" stop-color="#58b818"/></linearGradient>
<linearGradient id="gRed" x1="0" y1="0" x2="1" y2="1"><stop offset="0" stop-color="#e04040"/><stop offset="1" stop-color="#c00000"/></linearGradient>
<linearGradient id="gClip" x1="0" y1="0" x2="0" y2="1"><stop offset="0" stop-color="#e8b060"/><stop offset="1" stop-color="#d8a050"/></linearGradient>
<linearGradient id="gBinOr" x1="0" y1="0" x2="1" y2="0"><stop offset="0" stop-color="#f8b040"/><stop offset="1" stop-color="#f8c880"/></linearGradient>

<!-- new doc 44x46 -->
<symbol id="tNew" viewBox="0 0 44 46">
 <path d="M1 3h29v30l-10 12H1z" fill="url(#gPage)" stroke="#c8c8c8" stroke-width="1.2"/>
 <path d="M20 45l10-12h-10z" fill="#f4f4f4" stroke="#bdbdbd" stroke-width="1"/>
 <circle cx="30.5" cy="12" r="11.5" fill="url(#gGreen)" stroke="#1aa01a" stroke-width="1"/>
 <path d="M24 12h13M30.5 5.5v13" stroke="#fff" stroke-width="4"/>
</symbol>
<!-- open folder 48x38 -->
<symbol id="tOpen" viewBox="0 0 48 38">
 <path d="M4 1h16l3 3h20v18H4z" fill="#8e8f7c" stroke="#8a8b78"/>
 <path d="M12 7h30v22H12z" fill="#f4f4f4" stroke="#7e7f6c" stroke-width="2"/>
 <path d="M15 11h25v3H15zM15 17h25v3H15z" fill="#d6d6d6"/>
 <path d="M0 25h48l-3 12H3z" fill="#bdbea8" stroke="#8a8b78" stroke-width="1.2"/>
</symbol>
<!-- save 40x40 -->
<symbol id="tSave" viewBox="0 0 40 40">
 <rect x="0.5" y="0.5" width="39" height="39" rx="2" fill="#5d8ac8" stroke="#4c78b6"/>
 <rect x="6" y="2" width="28" height="20" fill="#f2f2ee"/>
 <path d="M6 3h28" stroke="#f08020" stroke-width="2"/>
 <path d="M7 8h26M7 14h26" stroke="#d8d8d0" stroke-width="1.5"/>
 <rect x="8" y="26" width="24" height="14" fill="#b0b0b0"/>
 <rect x="11" y="28" width="5" height="10" fill="#4c78b6"/>
 <rect x="20" y="28" width="9" height="10" fill="#d8d8d8"/>
</symbol>
<!-- export 34x45 -->
<symbol id="tExport" viewBox="0 0 34 45">
 <path d="M4.4 9.5V45H13.4V33H33.3V24H13.4V9.5z" fill="url(#gLime)" stroke="#78b010" stroke-width="0.8"/>
 <path d="M0.9 10L10.4 0.3 19.3 10z" fill="#a4d63a" stroke="#80b818" stroke-width="0.8"/>
</symbol>
<!-- undo 40x38 -->
<symbol id="tUndo" viewBox="0 0 40 38">
 <path d="M14 1L0 15l14 14v-8h6q13 0 17 16 3-24-17-24h-6z" fill="url(#gOrange)"/>
</symbol>
<symbol id="tRedo" viewBox="0 0 41 38">
 <path d="M26 1l15 14-15 14v-8h-6Q7 21 3 37 0 13 20 13h6z" fill="url(#gLime)"/>
</symbol>
<!-- delete 45x45 -->
<symbol id="tDel" viewBox="0 0 45 45">
 <path d="M0 8L8 0l14.5 14.5L37 0l8 8-14.5 14.5L45 37l-8 8-14.5-14.5L8 45l-8-8 14.5-14.5z" fill="url(#gRed)" stroke="#b80000" stroke-width="0.8"/>
</symbol>
<!-- copy 40x40 -->
<symbol id="tCopy" viewBox="0 0 40 40">
 <pattern id="pLines" width="4" height="3" patternUnits="userSpaceOnUse"><rect width="4" height="3" fill="#c4c4c4"/><rect width="4" height="1.2" fill="#a6a6a6"/></pattern>
 <rect x="1" y="1" width="22.5" height="26" fill="#f4f4f4" stroke="#c4c4c4" stroke-width="2"/>
 <rect x="4" y="4" width="17" height="20" fill="url(#pLines)"/>
 <rect x="15.5" y="13" width="23.5" height="26" fill="#f4f4f4" stroke="#c8c8c8" stroke-width="2"/>
 <rect x="18.5" y="16" width="17.5" height="17" fill="url(#pLines)"/>
 <rect x="18.5" y="33" width="8" height="2" fill="#b8b8b8"/>
</symbol>
<!-- cut 28x35 -->
<symbol id="tCut" viewBox="0 0 28 35">
 <path d="M3.5 1.5L7.5 0.5L16 20L13 22z" fill="#e4e4e4" stroke="#b4b4b4" stroke-width="1"/>
 <path d="M24.5 1.5L20.5 0.5L12 20L15 22z" fill="#e8e8e8" stroke="#b4b4b4" stroke-width="1"/>
 <rect x="3" y="24" width="8" height="9.5" rx="1.5" fill="none" stroke="#d81e1e" stroke-width="2.6"/>
 <rect x="17" y="24" width="8.5" height="9.5" rx="1.5" fill="none" stroke="#d81e1e" stroke-width="2.6"/>
</symbol>
<!-- paste 37x43 -->
<symbol id="tPaste" viewBox="0 0 37 43">
 <rect x="1" y="6" width="30" height="36" rx="1.5" fill="url(#gClip)" stroke="#c08a40" stroke-width="1"/>
 <path d="M9 1h14v8H9z" fill="#a8a8a0"/>
 <path d="M8 7h16v4H8z" fill="#b8b8b0"/>
 <rect x="15" y="20" width="21" height="22" fill="#f6f6f6" stroke="#c8c8c8" stroke-width="1.5"/>
 <path d="M18 24h15v14H18z" fill="#d4d4d4"/>
</symbol>
<!-- tools 39x39 -->
<symbol id="tTools" viewBox="0 0 39 39">
 <path d="M6 2q-6 4-3 9l6 1 22 23 4-4-22-23-1-6q-5-3-9 0l4 4-2 2z" fill="#d8d8d8" stroke="#bdbdbd" stroke-width="1"/>
 <path d="M36 3l-20 20 3 3 20-20z" fill="#d0d0d0" stroke="#b8b8b8" stroke-width="1"/>
 <path d="M17 21L3 35q2 4 6 2l13-13z" fill="#4a80c8" stroke="#3a6ab0" stroke-width="1"/>
</symbol>
<!-- package 44x45 -->
<symbol id="tPkg" viewBox="0 0 44 45">
 <rect x="1" y="1" width="22" height="30" fill="#f0f0f0" stroke="#c8c8c8" stroke-width="1.5"/>
 <path d="M12 22h32v5H12z" fill="#d8a050"/>
 <path d="M15 27h26v17H15z" fill="url(#gBrown)" stroke="#b07a38" stroke-width="1"/>
 <path d="M15 34h26" stroke="#b07a38" stroke-width="1.5"/>
 <path d="M11.5 16Q13 3.5 23 3.5Q31 3.5 32.5 13H37L30.5 23.5L24 13H27.5Q26.5 9 22.5 9Q17.5 9 16.5 18z" fill="#6cb040" stroke="#4e9a30" stroke-width="0.8"/>
</symbol>
<!-- house + play 46x40 -->
<symbol id="tHouseP" viewBox="0 0 46 40">
 <path d="M1 18L18 3l17 15" fill="none" stroke="#2a2a2a" stroke-width="2"/>
 <path d="M26 4h5v8l-5-4z" fill="#444"/>
 <path d="M6 19L18 8l12 11v18h-8v-10h-8v10H6z" fill="#4a4a4a"/>
 <path d="M30 10l16 14-16 14z" fill="url(#gPlay)"/>
</symbol>
<!-- spell + play 44x45 -->
<symbol id="tSpellP" viewBox="0 0 44 45">
 <rect x="1.5" y="1.5" width="33" height="40" fill="#fff" stroke="#ff0000" stroke-width="3"/>
 <path d="M8 10h20v5H8zM7 16h22v6H7zM9 22h18v5H9zM15 14h5v18h-5zM8 31h4v3H8zM15 31h5v3h-5z" fill="#c81010"/>
 <path d="M28 14l16 13-16 13z" fill="url(#gPlay)"/>
</symbol>
<!-- play 23x40 -->
<symbol id="tPlay" viewBox="0 0 23 40">
 <path d="M1 1l21 19L1 39z" fill="url(#gPlay)" stroke="#5a9a50" stroke-width="1.2"/>
</symbol>
<symbol id="tDown" viewBox="0 0 33 35">
 <path d="M8 1h17v15h8L16.5 35 0 16h8z" fill="url(#gBlue)"/>
</symbol>
<symbol id="tUp" viewBox="0 0 33 36">
 <path d="M8 35h17V20h8L16.5 1 0 20h8z" fill="url(#gBlue)"/>
</symbol>
<symbol id="tRight" viewBox="0 0 34 32">
 <path d="M1 8h17V0l16 16-16 16v-8H1z" fill="#2f62a8"/>
 <path d="M1 8h17V0l16 16H1z" fill="#4a7cc0"/>
</symbol>
<!-- binoculars 48x45 -->
<symbol id="tBino" viewBox="0 0 48 45">
 <path d="M14 18q6-14 20-12l-1-5 14 6-6 12-2-5q-9-2-12 6z" fill="url(#gBinOr)" stroke="#f0a030" stroke-width="1"/>
 <path d="M10 22h10l4 6 4-6h10l8 14-10 6-8-12h-8l-8 12-10-6z" fill="#505050"/>
 <circle cx="9" cy="36" r="8" fill="#3a3a3a"/><circle cx="9" cy="36" r="3.5" fill="#b0b0b0"/>
 <circle cx="39" cy="36" r="8" fill="#3a3a3a"/><circle cx="39" cy="36" r="3.5" fill="#b0b0b0"/>
</symbol>

<!-- second toolbar 48x48 -->
<symbol id="sGroup" viewBox="0 0 48 48"><path d="M0.75 19.5L16.4 7.0L32 19.5" stroke="#fff" stroke-width="2.6" fill="none"/><path d="M0.75 17.1L16.4 4.6L32 17.1" stroke="#1e1e1e" stroke-width="2" fill="none"/><path d="M4.5 16L16.4 7.5L22 12V31.5H17V21.5H12.5V31.5H4.5z" fill="#2e2e2e"/><path d="M16.4 35.8L32.6 22.65L48.25 35.8" stroke="#fff" stroke-width="2.6" fill="none"/><path d="M16.4 33.4L32.6 20.25L48.25 33.4" stroke="#1e1e1e" stroke-width="2" fill="none"/><path d="M20.75 32L32.6 23.5L43.9 32V47.75H37V37.75H28.9V47.75H20.75z" fill="#2e2e2e"/></symbol>
<symbol id="sList" viewBox="0 0 48 48">
 <circle cx="8" cy="6" r="3.5" fill="#f00"/><rect x="11" y="4" width="35" height="4" fill="#f00"/>
 <circle cx="14" cy="18.5" r="3.5" fill="#000"/><rect x="20" y="17" width="24" height="3" fill="#000"/>
 <circle cx="14" cy="30.5" r="3.5" fill="#000"/><rect x="20" y="29" width="24" height="3" fill="#000"/>
 <circle cx="14" cy="42" r="3.5" fill="#000"/><rect x="20" y="40.5" width="24" height="3" fill="#000"/>
</symbol>
<symbol id="sHouse" viewBox="0 0 48 48"><path d="M2.75 27.65L24.6 10.8L46.5 27.65" stroke="#fff" stroke-width="2.6" fill="none"/><path d="M2.75 25.25L24.6 8.4L46.5 25.25" stroke="#1e1e1e" stroke-width="2.2" fill="none"/><rect x="35.25" y="12" width="5" height="10" fill="#333"/><path d="M8.4 23L24.6 11.5L40.25 23V44H29.6V30.25H17.75V44H8.4z" fill="#2e2e2e"/></symbol>
<symbol id="sHouseA" viewBox="0 0 48 48"><path d="M2.75 27.65L24.6 10.8L46.5 27.65" stroke="#fff" stroke-width="2.6" fill="none"/><path d="M2.75 25.25L24.6 8.4L46.5 25.25" stroke="#1e1e1e" stroke-width="2.2" fill="none"/><rect x="35.25" y="12" width="5" height="10" fill="#333"/><path d="M8.4 23L24.6 11.5L40.25 23V44H29.6V30.25H17.75V44H8.4z" fill="#2e2e2e"/><linearGradient id="gHA" x1="0" y1="0" x2="1" y2="0"><stop offset="0" stop-color="#3c5666"/><stop offset="0.4" stop-color="#b8ccd8"/><stop offset="1" stop-color="#80a4bc"/></linearGradient><path d="M10.4 28.2H32.4V21.6L46.5 34.4L32.4 47.3V40.7H10.4z" fill="url(#gHA)" stroke="#3e6078" stroke-width="1.2"/></symbol>
<symbol id="sHouseB" viewBox="0 0 48 48"><path d="M2.75 27.65L24.6 10.8L46.5 27.65" stroke="#fff" stroke-width="2.6" fill="none"/><path d="M2.75 25.25L24.6 8.4L46.5 25.25" stroke="#1e1e1e" stroke-width="2.2" fill="none"/><path d="M8.4 23L24.6 11.5L40.25 23V44H29.6V30.25H17.75V44H8.4z" fill="#2e2e2e"/><path d="M8 22Q12 2 26 1.5Q40 2 38 18H47L37.5 31.5L28 18H32Q31 9 25 8Q17 8 13 24z" fill="#5a5af0" stroke="#3030c8" stroke-width="1.2"/></symbol>
<symbol id="sGroupB" viewBox="0 0 48 48"><path d="M0.75 19.5L16.4 7.0L32 19.5" stroke="#fff" stroke-width="2.6" fill="none"/><path d="M0.75 17.1L16.4 4.6L32 17.1" stroke="#1e1e1e" stroke-width="2" fill="none"/><path d="M4.5 16L16.4 7.5L22 12V31.5H17V21.5H12.5V31.5H4.5z" fill="#2e2e2e"/><path d="M10 14Q14 1 27 1.5Q40 2 38 18H47L37.5 31.5L28 18H32Q31 9 26 8Q19 8 16 16z" fill="#5a5af0" stroke="#3030c8" stroke-width="1.2"/><path d="M16.4 35.8L32.6 22.65L48.25 35.8" stroke="#fff" stroke-width="2.6" fill="none"/><path d="M16.4 33.4L32.6 20.25L48.25 33.4" stroke="#1e1e1e" stroke-width="2" fill="none"/><path d="M20.75 32L32.6 23.5L43.9 32V47.75H37V37.75H28.9V47.75H20.75z" fill="#2e2e2e"/></symbol>
<symbol id="sPen" viewBox="0 0 48 48"><rect x="4" y="6" width="33" height="4" fill="#2e4e74"/><rect x="4" y="6" width="4" height="36" fill="url(#gPenF)"/><rect x="4" y="39.8" width="16" height="2.5" fill="#000"/><path d="M6 42L36 12" stroke="#141414" stroke-width="8"/><path d="M11 38L35 14" stroke="#e8e8e8" stroke-width="2.5"/><path d="M35 5l5-2 6 5-3 7-5 1-4-4z" fill="#b48a64"/></symbol>
<symbol id="sPenP" viewBox="0 0 48 48"><rect x="4" y="6" width="33" height="4" fill="#2e4e74"/><rect x="4" y="6" width="4" height="36" fill="url(#gPenF)"/><rect x="4" y="39.8" width="16" height="2.5" fill="#000"/><path d="M6 42L36 12" stroke="#141414" stroke-width="8"/><path d="M11 38L35 14" stroke="#e8e8e8" stroke-width="2.5"/><path d="M35 5l5-2 6 5-3 7-5 1-4-4z" fill="#b48a64"/><circle cx="35" cy="37" r="10.5" fill="#70bc70" stroke="#3e9e3e" stroke-width="1.5"/><path d="M28.5 37h13M35 30.5v13" stroke="#fff" stroke-width="4"/></symbol>
</defs>
</svg>
<div class="r" style="left:0px;top:0px;width:2880px;height:46px;background:#f1f1f6;"></div><svg class="i" style="left:2px;top:10px" width="32" height="26" viewBox="0 0 32 26"><rect x="0.5" y="0.5" width="31" height="25" fill="#f4f4f4" stroke="#8a8a8a"/><rect x="2" y="3" width="15" height="20" fill="#3f8f9a"/><path d="M2 13 q8 -6 15 -8 v18 H2z" fill="#5aa47a"/><path d="M20 5h6M20 9h6M20 13h6M20 17h6M20 21h6" stroke="#c8c8c8" stroke-width="1.5"/><rect x="27" y="3" width="3" height="14" fill="#5aa0a8"/></svg><div class="t" style="left:39.0px;top:14.0px;font-size:23.6px;letter-spacing:0.009px;">C:\pico\lua\learn_lua\works\test.luastg - LuaSTG Editor</div><svg class="i" style="left:2620px;top:0px" width="260" height="46"><path d="M17 22.5h20" stroke="#111" stroke-width="1.6"/><rect x="108.5" y="15.5" width="15" height="15" rx="3" fill="none" stroke="#111" stroke-width="1.6"/><path d="M112 12.2h9q5.8 0 5.8 5.8v9" fill="none" stroke="#111" stroke-width="1.6"/><path d="M201 12l20 20M221 12l-20 20" stroke="#111" stroke-width="1.6"/></svg><div class="r" style="left:0px;top:46px;width:2880px;height:36px;background:#ffffff;"></div><div class="r" style="left:0px;top:82px;width:2880px;height:4px;background:#f0f0f0;"></div><div class="r" style="left:0px;top:86px;width:2880px;height:2px;background:#8f8f8f;"></div><div class="t" style="left:13.0px;top:54.0px;font-size:23.6px;letter-spacing:0.368px;">File</div><div class="t" style="left:79.0px;top:54.0px;font-size:23.6px;letter-spacing:1.300px;">Edit</div><div class="t" style="left:151.0px;top:54.0px;font-size:23.6px;letter-spacing:1.866px;">Help</div><div class="r" style="left:14px;top:76px;width:12px;height:2px;background:#000;"></div><div class="r" style="left:80px;top:76px;width:14px;height:2px;background:#000;"></div><div class="r" style="left:152px;top:76px;width:18px;height:2px;background:#000;"></div><div class="r" style="left:0px;top:88px;width:2880px;height:62px;background:#ffffff;"></div><div class="r" style="left:0px;top:150px;width:2880px;height:2px;background:#dadada;"></div><div class="r" style="left:252px;top:94px;width:2px;height:52px;background:#6f6f6f;"></div><div class="r" style="left:392px;top:94px;width:2px;height:52px;background:#6f6f6f;"></div><div class="r" style="left:656px;top:94px;width:2px;height:52px;background:#6f6f6f;"></div><div class="r" style="left:982px;top:94px;width:2px;height:52px;background:#6f6f6f;"></div><div class="r" style="left:1184px;top:94px;width:2px;height:52px;background:#6f6f6f;"></div><div class="r" style="left:1358px;top:94px;width:2px;height:52px;background:#6f6f6f;"></div><div class="r" style="left:1118px;top:90px;width:61px;height:57px;background:#cce8ff;border:1.5px solid #99d1ff;border-radius:4px"></div><div class="r" style="left:1197px;top:98px;width:93px;height:43px;background:#fff;border:1.5px solid #dcdcdc;border-bottom:2px solid #6a6a6a;border-radius:2px"></div><svg class="i" style="left:11.0px;top:96.0px;" width="44" height="46"><use href="#tNew"/></svg><svg class="i" style="left:68.0px;top:100.0px;" width="48" height="38"><use href="#tOpen"/></svg><svg class="i" style="left:134.0px;top:98.0px;" width="40" height="40"><use href="#tSave"/></svg><svg class="i" style="left:199.0px;top:96.0px;" width="34" height="45"><use href="#tExport"/></svg><svg class="i" style="left:274.0px;top:100.0px;" width="40" height="38"><use href="#tUndo"/></svg><svg class="i" style="left:335.0px;top:100.0px;" width="41" height="38"><use href="#tRedo"/></svg><svg class="i" style="left:411.0px;top:97.0px;" width="45" height="45"><use href="#tDel"/></svg><svg class="i" style="left:478.0px;top:100.0px;" width="40" height="40"><use href="#tCopy"/></svg><svg class="i" style="left:544.0px;top:103.0px;" width="28" height="35"><use href="#tCut"/></svg><svg class="i" style="left:603.0px;top:97.0px;" width="37" height="43"><use href="#tPaste"/></svg><svg class="i" style="left:677.0px;top:101.0px;" width="39" height="39"><use href="#tTools"/></svg><svg class="i" style="left:738.0px;top:97.0px;" width="44" height="45"><use href="#tPkg"/></svg><svg class="i" style="left:800.0px;top:104.0px;" width="46" height="40"><use href="#tHouseP"/></svg><svg class="i" style="left:864.0px;top:98.0px;" width="44" height="45"><use href="#tSpellP"/></svg><svg class="i" style="left:935.0px;top:100.0px;" width="23" height="40"><use href="#tPlay"/></svg><svg class="i" style="left:1007.0px;top:104.0px;" width="33" height="35"><use href="#tDown"/></svg><svg class="i" style="left:1069.0px;top:104.0px;" width="33" height="36"><use href="#tUp"/></svg><svg class="i" style="left:1133.0px;top:106.0px;" width="34" height="32"><use href="#tRight"/></svg><svg class="i" style="left:1298.0px;top:97.0px;" width="48" height="45"><use href="#tBino"/></svg><svg class="i" style="left:1383.0px;top:104.0px;" width="33" height="35"><use href="#tDown"/></svg><svg class="i" style="left:1445.0px;top:104.0px;" width="33" height="36"><use href="#tUp"/></svg><div class="r" style="left:0px;top:152px;width:2880px;height:43px;background:#f0f0f0;"></div><div class="r" style="left:5px;top:157px;width:102.0px;height:38px;background:#f2f2f2;border:1px solid #dedede;border-bottom:none"></div><div class="t" style="left:16.0px;top:167.0px;font-size:23px;letter-spacing:0.214px;">General</div><div class="r" style="left:107px;top:153px;width:93.0px;height:45px;background:#f9f9f9;border:1px solid #e3e3e3;border-bottom:none"></div><div class="t" style="left:122.0px;top:161.5px;font-size:23px;letter-spacing:0.922px;">Stage</div><div class="r" style="left:200px;top:157px;width:81.0px;height:38px;background:#f2f2f2;border:1px solid #dedede;border-bottom:none"></div><div class="t" style="left:212.0px;top:167.0px;font-size:23px;letter-spacing:0.403px;">Task</div><div class="r" style="left:281px;top:157px;width:98.0px;height:38px;background:#f2f2f2;border:1px solid #dedede;border-bottom:none"></div><div class="t" style="left:292.0px;top:167.0px;font-size:23px;letter-spacing:0.729px;">Enemy</div><div class="r" style="left:379px;top:157px;width:84.0px;height:38px;background:#f2f2f2;border:1px solid #dedede;border-bottom:none"></div><div class="t" style="left:390.0px;top:167.0px;font-size:23px;letter-spacing:-0.544px;">Boss</div><div class="r" style="left:463px;top:157px;width:84.0px;height:38px;background:#f2f2f2;border:1px solid #dedede;border-bottom:none"></div><div class="t" style="left:474.0px;top:167.0px;font-size:23px;letter-spacing:0.571px;">Bullet</div><div class="r" style="left:547px;top:157px;width:84.0px;height:38px;background:#f2f2f2;border:1px solid #dedede;border-bottom:none"></div><div class="t" style="left:558.0px;top:167.0px;font-size:23px;letter-spacing:-0.344px;">Laser</div><div class="r" style="left:631px;top:157px;width:97.5px;height:38px;background:#f2f2f2;border:1px solid #dedede;border-bottom:none"></div><div class="t" style="left:642.0px;top:167.0px;font-size:23px;letter-spacing:1.483px;">Object</div><div class="r" style="left:728.5px;top:157px;width:84.5px;height:38px;background:#f2f2f2;border:1px solid #dedede;border-bottom:none"></div><div class="t" style="left:739.5px;top:167.0px;font-size:23px;letter-spacing:1.163px;">Unit</div><div class="r" style="left:813px;top:157px;width:85.7px;height:38px;background:#f2f2f2;border:1px solid #dedede;border-bottom:none"></div><div class="t" style="left:825.0px;top:167.0px;font-size:23px;letter-spacing:0.742px;">Audio</div><div class="r" style="left:898.7px;top:157px;width:123.3px;height:38px;background:#f2f2f2;border:1px solid #dedede;border-bottom:none"></div><div class="t" style="left:909.7px;top:167.0px;font-size:23px;letter-spacing:0.279px;">Resource</div><div class="r" style="left:1022px;top:157px;width:96.6px;height:38px;background:#f2f2f2;border:1px solid #dedede;border-bottom:none"></div><div class="t" style="left:1033.0px;top:167.0px;font-size:23px;letter-spacing:1.269px;">Effects</div><div class="r" style="left:0px;top:195px;width:2876px;height:73px;background:#f9f9f9;border:2px solid #e2e2e2;border-top:none"></div><div class="r" style="left:0px;top:268px;width:2880px;height:2px;background:#f2f2f2;"></div><div class="r" style="left:10.5px;top:201px;width:58px;height:58px;background:#fdfdfd;border:2px solid #d8d8d8;border-radius:7px"></div><svg class="i" style="left:15.5px;top:206.0px;" width="48" height="48"><use href="#sGroup"/></svg><div class="r" style="left:74.5px;top:201px;width:58px;height:58px;background:#fdfdfd;border:2px solid #d8d8d8;border-radius:7px"></div><svg class="i" style="left:79.5px;top:206.0px;" width="48" height="48"><use href="#sList"/></svg><div class="r" style="left:138.5px;top:201px;width:58px;height:58px;background:#fdfdfd;border:2px solid #d8d8d8;border-radius:7px"></div><svg class="i" style="left:143.5px;top:206.0px;" width="48" height="48"><use href="#sHouse"/></svg><div class="r" style="left:202.5px;top:201px;width:58px;height:58px;background:#fdfdfd;border:2px solid #d8d8d8;border-radius:7px"></div><svg class="i" style="left:207.5px;top:206.0px;" width="48" height="48"><use href="#sHouseA"/></svg><div class="r" style="left:266.5px;top:201px;width:58px;height:58px;background:#fdfdfd;border:2px solid #d8d8d8;border-radius:7px"></div><svg class="i" style="left:271.5px;top:206.0px;" width="48" height="48"><use href="#sHouseB"/></svg><div class="r" style="left:330.5px;top:201px;width:58px;height:58px;background:#fdfdfd;border:2px solid #d8d8d8;border-radius:7px"></div><svg class="i" style="left:335.5px;top:206.0px;" width="48" height="48"><use href="#sGroupB"/></svg><div class="r" style="left:394.5px;top:201px;width:58px;height:58px;background:#fdfdfd;border:2px solid #d8d8d8;border-radius:7px"></div><svg class="i" style="left:400.0px;top:206.0px;overflow:hidden" width="48" height="48"><use href="#bgimg"/></svg><div class="r" style="left:483px;top:201px;width:58px;height:58px;background:#fdfdfd;border:2px solid #d8d8d8;border-radius:7px"></div><svg class="i" style="left:488.0px;top:206.0px;" width="48" height="48"><use href="#sPen"/></svg><div class="r" style="left:547px;top:201px;width:58px;height:58px;background:#fdfdfd;border:2px solid #d8d8d8;border-radius:7px"></div><svg class="i" style="left:552.0px;top:206.0px;" width="48" height="48"><use href="#sPenP"/></svg><div class="r" style="left:466px;top:208px;width:2px;height:42px;background:#a8a8a8;"></div><div class="r" style="left:0px;top:270px;width:2880px;height:1510px;background:#edeada;"></div><div class="r" style="left:4px;top:274px;width:612px;height:728px;background:#fff;border:2px solid #a1a4ad"></div><div class="r" style="left:580px;top:278px;width:32px;height:720px;background:#efefef;"></div><div class="r" style="left:594px;top:870px;width:4px;height:60px;background:#858585;"></div><div class="r" style="left:8px;top:966px;width:570px;height:32px;background:#efefef;"></div><div class="r" style="left:42px;top:980px;width:388px;height:4px;background:#858585;"></div><svg class="i" style="left:28.0px;top:328.0px;" width="30" height="30"><use href="#err"/></svg><div class="t" style="left:60.0px;top:337.6px;font-size:26.5px;letter-spacing:0.019px;">can not insert "taskwait" as child of</div><div class="t" style="left:27.0px;top:369.1px;font-size:26.5px;letter-spacing:-0.102px;">"bossspellcard"</div><svg class="i" style="left:28.0px;top:430.0px;" width="30" height="30"><use href="#err"/></svg><div class="t" style="left:60.0px;top:439.6px;font-size:26.5px;letter-spacing:-0.080px;">can not insert "repeat" as child of</div><div class="t" style="left:27.0px;top:471.1px;font-size:26.5px;letter-spacing:0.319px;">"taskwait"</div><svg class="i" style="left:28.0px;top:532.0px;" width="30" height="30"><use href="#err"/></svg><div class="t" style="left:60.0px;top:541.6px;font-size:26.5px;letter-spacing:-0.080px;">can not insert "repeat" as child of</div><div class="t" style="left:27.0px;top:573.1px;font-size:26.5px;letter-spacing:-0.056px;">"bulletcreatestraightex"</div><svg class="i" style="left:28.0px;top:634.0px;" width="30" height="30"><use href="#err"/></svg><div class="t" style="left:60.0px;top:643.6px;font-size:26.5px;letter-spacing:0.019px;">can not insert "taskwait" as child of</div><div class="t" style="left:27.0px;top:675.1px;font-size:26.5px;letter-spacing:0.319px;">"taskwait"</div><svg class="i" style="left:28.0px;top:736.0px;" width="30" height="30"><use href="#err"/></svg><div class="t" style="left:60.0px;top:745.6px;font-size:26.5px;letter-spacing:0.019px;">can not insert "taskwait" as child of</div><div class="t" style="left:27.0px;top:777.1px;font-size:26.5px;letter-spacing:-0.062px;">"bulletcreatestraight"</div><svg class="i" style="left:28.0px;top:838.0px;" width="30" height="30"><use href="#err"/></svg><div class="t" style="left:60.0px;top:847.6px;font-size:26.5px;letter-spacing:-0.080px;">can not insert "repeat" as child of</div><div class="t" style="left:27.0px;top:879.1px;font-size:26.5px;letter-spacing:-0.083px;">"taskmoveto"</div><div class="r" style="left:4px;top:1006px;width:612px;height:48px;background:#fff;border:2px solid #a1a4ad"></div><div class="t" style="left:13.0px;top:1018.8px;font-size:25px;letter-spacing:0.454px;">Node type: move to</div><div class="r" style="left:570px;top:1056px;width:46px;height:720px;background:#f2f2f2;"></div><div class="r" style="left:4px;top:1056px;width:274px;height:46px;background:#d0d0d0;"></div><div class="r" style="left:280px;top:1058px;width:288px;height:44px;background:#fff;border:2px solid #808080;border-radius:2px"></div><div class="t" style="left:22.0px;top:1069.7px;font-size:24px;letter-spacing:0.188px;">Destination</div><div class="t" style="left:289.0px;top:1066.8px;font-size:25px;letter-spacing:0.030px;">-100,144</div><svg class="i" style="left:541px;top:1077px;color:#555" width="18" height="10"><use href="#chev"/></svg><div class="r" style="left:572px;top:1058px;width:44px;height:44px;background:#fbfbfb;border:2px solid #cacaca;border-radius:5px"></div><div class="r" style="left:592px;top:1086px;width:4px;height:4px;background:#333;"></div><div class="r" style="left:4px;top:1104px;width:274px;height:46px;background:#d0d0d0;"></div><div class="r" style="left:280px;top:1106px;width:288px;height:44px;background:#fff;border:2px solid #808080;border-radius:2px"></div><div class="t" style="left:22.0px;top:1117.7px;font-size:24px;letter-spacing:-0.268px;">nFrame</div><div class="t" style="left:289.0px;top:1114.8px;font-size:25px;letter-spacing:0.096px;">20</div><svg class="i" style="left:541px;top:1125px;color:#555" width="18" height="10"><use href="#chev"/></svg><div class="r" style="left:572px;top:1106px;width:44px;height:44px;background:#fbfbfb;border:2px solid #cacaca;border-radius:5px"></div><div class="r" style="left:592px;top:1134px;width:4px;height:4px;background:#333;"></div><div class="r" style="left:4px;top:1152px;width:274px;height:46px;background:#d0d0d0;"></div><div class="r" style="left:280px;top:1154px;width:288px;height:44px;background:#fff;border:2px solid #808080;border-radius:2px"></div><div class="t" style="left:22.0px;top:1165.7px;font-size:24px;letter-spacing:-0.229px;">Mode</div><div class="t" style="left:288.0px;top:1162.8px;font-size:25px;letter-spacing:-1.858px;">MOVE_NORMAL</div><svg class="i" style="left:541px;top:1173px;color:#555" width="18" height="10"><use href="#chev"/></svg><div class="r" style="left:572px;top:1154px;width:44px;height:44px;background:#fbfbfb;border:2px solid #cacaca;border-radius:5px"></div><div class="r" style="left:592px;top:1182px;width:4px;height:4px;background:#333;"></div><div class="r" style="left:4px;top:1200px;width:274px;height:46px;background:#d0d0d0;"></div><div class="r" style="left:280px;top:1202px;width:288px;height:44px;background:#fff;border:2px solid #c9c9c9;border-radius:2px"></div><div class="r" style="left:286px;top:1208px;width:242px;height:32px;background:#efefef;"></div><svg class="i" style="left:541px;top:1221px;color:#c2c2c2" width="18" height="10"><use href="#chev"/></svg><div class="r" style="left:572px;top:1202px;width:44px;height:44px;background:#fafafa;border:2px solid #ececec;border-radius:5px"></div><div class="r" style="left:593px;top:1230px;width:3px;height:3px;background:#7a8aa0;"></div><div class="r" style="left:4px;top:1248px;width:274px;height:46px;background:#d0d0d0;"></div><div class="r" style="left:280px;top:1250px;width:288px;height:44px;background:#fff;border:2px solid #c9c9c9;border-radius:2px"></div><div class="r" style="left:286px;top:1256px;width:242px;height:32px;background:#efefef;"></div><svg class="i" style="left:541px;top:1269px;color:#c2c2c2" width="18" height="10"><use href="#chev"/></svg><div class="r" style="left:572px;top:1250px;width:44px;height:44px;background:#fafafa;border:2px solid #ececec;border-radius:5px"></div><div class="r" style="left:593px;top:1278px;width:3px;height:3px;background:#7a8aa0;"></div><div class="r" style="left:4px;top:1296px;width:274px;height:46px;background:#d0d0d0;"></div><div class="r" style="left:280px;top:1298px;width:288px;height:44px;background:#fff;border:2px solid #c9c9c9;border-radius:2px"></div><div class="r" style="left:286px;top:1304px;width:242px;height:32px;background:#efefef;"></div><svg class="i" style="left:541px;top:1317px;color:#c2c2c2" width="18" height="10"><use href="#chev"/></svg><div class="r" style="left:572px;top:1298px;width:44px;height:44px;background:#fafafa;border:2px solid #ececec;border-radius:5px"></div><div class="r" style="left:593px;top:1326px;width:3px;height:3px;background:#7a8aa0;"></div><div class="r" style="left:4px;top:1344px;width:274px;height:46px;background:#d0d0d0;"></div><div class="r" style="left:280px;top:1346px;width:288px;height:44px;background:#fff;border:2px solid #c9c9c9;border-radius:2px"></div><div class="r" style="left:286px;top:1352px;width:242px;height:32px;background:#efefef;"></div><svg class="i" style="left:541px;top:1365px;color:#c2c2c2" width="18" height="10"><use href="#chev"/></svg><div class="r" style="left:572px;top:1346px;width:44px;height:44px;background:#fafafa;border:2px solid #ececec;border-radius:5px"></div><div class="r" style="left:593px;top:1374px;width:3px;height:3px;background:#7a8aa0;"></div><div class="r" style="left:4px;top:1392px;width:274px;height:46px;background:#d0d0d0;"></div><div class="r" style="left:280px;top:1394px;width:288px;height:44px;background:#fff;border:2px solid #c9c9c9;border-radius:2px"></div><div class="r" style="left:286px;top:1400px;width:242px;height:32px;background:#efefef;"></div><svg class="i" style="left:541px;top:1413px;color:#c2c2c2" width="18" height="10"><use href="#chev"/></svg><div class="r" style="left:572px;top:1394px;width:44px;height:44px;background:#fafafa;border:2px solid #ececec;border-radius:5px"></div><div class="r" style="left:593px;top:1422px;width:3px;height:3px;background:#7a8aa0;"></div><div class="r" style="left:4px;top:1440px;width:274px;height:46px;background:#d0d0d0;"></div><div class="r" style="left:280px;top:1442px;width:288px;height:44px;background:#fff;border:2px solid #c9c9c9;border-radius:2px"></div><div class="r" style="left:286px;top:1448px;width:242px;height:32px;background:#efefef;"></div><svg class="i" style="left:541px;top:1461px;color:#c2c2c2" width="18" height="10"><use href="#chev"/></svg><div class="r" style="left:572px;top:1442px;width:44px;height:44px;background:#fafafa;border:2px solid #ececec;border-radius:5px"></div><div class="r" style="left:593px;top:1470px;width:3px;height:3px;background:#7a8aa0;"></div><div class="r" style="left:4px;top:1488px;width:274px;height:46px;background:#d0d0d0;"></div><div class="r" style="left:280px;top:1490px;width:288px;height:44px;background:#fff;border:2px solid #c9c9c9;border-radius:2px"></div><div class="r" style="left:286px;top:1496px;width:242px;height:32px;background:#efefef;"></div><svg class="i" style="left:541px;top:1509px;color:#c2c2c2" width="18" height="10"><use href="#chev"/></svg><div class="r" style="left:572px;top:1490px;width:44px;height:44px;background:#fafafa;border:2px solid #ececec;border-radius:5px"></div><div class="r" style="left:593px;top:1518px;width:3px;height:3px;background:#7a8aa0;"></div><div class="r" style="left:4px;top:1536px;width:274px;height:46px;background:#d0d0d0;"></div><div class="r" style="left:280px;top:1538px;width:288px;height:44px;background:#fff;border:2px solid #c9c9c9;border-radius:2px"></div><div class="r" style="left:286px;top:1544px;width:242px;height:32px;background:#efefef;"></div><svg class="i" style="left:541px;top:1557px;color:#c2c2c2" width="18" height="10"><use href="#chev"/></svg><div class="r" style="left:572px;top:1538px;width:44px;height:44px;background:#fafafa;border:2px solid #ececec;border-radius:5px"></div><div class="r" style="left:593px;top:1566px;width:3px;height:3px;background:#7a8aa0;"></div><div class="r" style="left:4px;top:1584px;width:274px;height:46px;background:#d0d0d0;"></div><div class="r" style="left:280px;top:1586px;width:288px;height:44px;background:#fff;border:2px solid #c9c9c9;border-radius:2px"></div><div class="r" style="left:286px;top:1592px;width:242px;height:32px;background:#efefef;"></div><svg class="i" style="left:541px;top:1605px;color:#c2c2c2" width="18" height="10"><use href="#chev"/></svg><div class="r" style="left:572px;top:1586px;width:44px;height:44px;background:#fafafa;border:2px solid #ececec;border-radius:5px"></div><div class="r" style="left:593px;top:1614px;width:3px;height:3px;background:#7a8aa0;"></div><div class="r" style="left:4px;top:1632px;width:274px;height:46px;background:#d0d0d0;"></div><div class="r" style="left:280px;top:1634px;width:288px;height:44px;background:#fff;border:2px solid #c9c9c9;border-radius:2px"></div><div class="r" style="left:286px;top:1640px;width:242px;height:32px;background:#efefef;"></div><svg class="i" style="left:541px;top:1653px;color:#c2c2c2" width="18" height="10"><use href="#chev"/></svg><div class="r" style="left:572px;top:1634px;width:44px;height:44px;background:#fafafa;border:2px solid #ececec;border-radius:5px"></div><div class="r" style="left:593px;top:1662px;width:3px;height:3px;background:#7a8aa0;"></div><div class="r" style="left:4px;top:1680px;width:274px;height:46px;background:#d0d0d0;"></div><div class="r" style="left:280px;top:1682px;width:288px;height:44px;background:#fff;border:2px solid #c9c9c9;border-radius:2px"></div><div class="r" style="left:286px;top:1688px;width:242px;height:32px;background:#efefef;"></div><svg class="i" style="left:541px;top:1701px;color:#c2c2c2" width="18" height="10"><use href="#chev"/></svg><div class="r" style="left:572px;top:1682px;width:44px;height:44px;background:#fafafa;border:2px solid #ececec;border-radius:5px"></div><div class="r" style="left:593px;top:1710px;width:3px;height:3px;background:#7a8aa0;"></div><div class="r" style="left:4px;top:1728px;width:274px;height:46px;background:#d0d0d0;"></div><div class="r" style="left:280px;top:1730px;width:288px;height:44px;background:#fff;border:2px solid #c9c9c9;border-radius:2px"></div><div class="r" style="left:286px;top:1736px;width:242px;height:32px;background:#efefef;"></div><svg class="i" style="left:541px;top:1749px;color:#c2c2c2" width="18" height="10"><use href="#chev"/></svg><div class="r" style="left:572px;top:1730px;width:44px;height:44px;background:#fafafa;border:2px solid #ececec;border-radius:5px"></div><div class="r" style="left:593px;top:1758px;width:3px;height:3px;background:#7a8aa0;"></div><div class="r" style="left:620px;top:274px;width:2256px;height:1502px;background:#fff;border:2px solid #727986"></div><div class="r" style="left:2840px;top:278px;width:32px;height:1494px;background:#efefef;"></div><div class="r" style="left:2854px;top:312px;width:4px;height:1320px;background:#858585;"></div><div class="r" style="left:622px;top:278px;width:2218px;height:1494px;overflow:hidden"><div class="r" style="left:-622px;top:-278px;width:2880px;height:1776px"><svg class="i" style="left:0;top:0" width="2880" height="1776" shape-rendering="crispEdges"><path d="M647 318V1499M650 339H668M650 379H668M658 419H668M685 438V1379M698 459H706M723 478V539M726 499H744M734 539H744M761 558V1339M774 579H782M799 598V619M802 619H820M774 659H782M799 678V699M810 699H820M837 718V1299M850 739H858M875 758V939M886 779H896M913 798V899M926 819H934M951 838V859M954 859H972M914 899H934M878 939H896M850 979H858M875 998V1179M886 1019H896M913 1038V1139M926 1059H934M951 1078V1099M954 1099H972M914 1139H934M878 1179H896M838 1219H858M850 1259H858M850 1299H858M762 1339H782M698 1379H706M723 1398V1419M734 1419H744M761 1438V1459M762 1459H782M658 1499H668M685 1518V1539M698 1539H706M723 1558V1579M734 1579H744M761 1598V1779M774 1619H782M799 1638V1699M802 1659H820M802 1699H820M762 1739H782M762 1779H782" stroke="#464646" stroke-width="2" stroke-dasharray="2 2" fill="none"/></svg><svg class="i" style="left:630.0px;top:282.0px;" width="32" height="32"><use href="#fold"/></svg><div class="t" style="left:672.5px;top:285.4px;font-size:25.5px;letter-spacing:0.758px;">project</div><svg class="i" style="left:668.0px;top:322.0px;" width="32" height="32"><use href="#gear"/></svg><div class="t" style="left:710.5px;top:325.4px;font-size:25.5px;letter-spacing:0.517px;">project settings</div><svg class="i" style="left:668.0px;top:362.0px;" width="32" height="32"><use href="#fold"/></svg><div class="t" style="left:709.5px;top:365.4px;font-size:25.5px;letter-spacing:-0.136px;">Resource</div><svg class="i" style="left:638.0px;top:410.0px;" width="18" height="18"><use href="#exm"/></svg><svg class="i" style="left:668.0px;top:402.0px;" width="32" height="32"><use href="#fold"/></svg><div class="t" style="left:710.5px;top:405.4px;font-size:25.5px;letter-spacing:-1.003px;">Class</div><svg class="i" style="left:676.0px;top:450.0px;" width="18" height="18"><use href="#exm"/></svg><svg class="i" style="left:706.0px;top:442.0px;" width="32" height="32"><use href="#boss"/></svg><div class="t" style="left:748.5px;top:445.4px;font-size:25.5px;letter-spacing:0.397px;">define boss "Boss"</div><svg class="i" style="left:744.0px;top:482.0px;" width="32" height="32"><use href="#gcross"/></svg><div class="t" style="left:786.5px;top:485.4px;font-size:25.5px;letter-spacing:0.215px;">move to (144,144) in 60 frame(s)</div><svg class="i" style="left:714.0px;top:530.0px;" width="18" height="18"><use href="#exm"/></svg><svg class="i" style="left:744.0px;top:522.0px;" width="32" height="32"><use href="#spell"/></svg><div class="t" style="left:787.5px;top:525.4px;font-size:25.5px;letter-spacing:0.389px;">spell card "</div><svg class="i" style="left:918px;top:525px" width="190" height="24" viewBox="0 0 190 24"><g stroke="#111" stroke-width="2" fill="none"><path d="M1 4h9M5 1v22M1 12l4-4 5 5M13 2l3 5M21 1l-3 6M12 10h10M17 10v13M17 14l-5 8M17 14l6 8"/><path d="M24 2l3 4M32 2l3 4M23 5h9M33 5h9M27 8l-4 8M26 12v11M30 13h12M38 9v14l-3-1M31 17l3 3"/><path d="M50 14h6"/><path d="M59 3h21M62 3v7h16V3M70 1v9M58 12h23M62 15h16v5H62zM59 23h22"/><path d="M84 4v15M89 1v22M84 19l5-4M95 1l-3 8M93 6h9M100 6l-8 17M94 12l8 11"/><path d="M108 2h7v14h-7zM124 2h-7v14h7M108 7h7M117 7h7M108 12h7M117 12h7M106 17h20M111 20l-3 3M121 20l3 3"/><path d="M130 3h20M140 1v6M133 7h14M134 10h12v4H134zM130 16h20M134 18h12v5H134z"/><path d="M154 1v22M151 7v6M157 6l-2 4M161 1l2 3M171 1l-2 3M161 5h10v7h-10zM163 12l-3 11M168 12v10h4"/></g></svg><div class="r" style="left:1098px;top:526px;width:2px;height:7px;background:#111;"></div><div class="r" style="left:1102px;top:526px;width:2px;height:7px;background:#111;"></div><svg class="i" style="left:752.0px;top:570.0px;" width="18" height="18"><use href="#exm"/></svg><svg class="i" style="left:782.0px;top:562.0px;" width="32" height="32"><use href="#pen"/></svg><div class="t" style="left:825.5px;top:565.4px;font-size:25.5px;letter-spacing:0.578px;">task before start</div><svg class="i" style="left:820.0px;top:602.0px;" width="32" height="32"><use href="#arrow"/></svg><div class="t" style="left:862.5px;top:605.4px;font-size:25.5px;letter-spacing:0.211px;">move to (100,144) in 1 frame(s)</div><svg class="i" style="left:752.0px;top:650.0px;" width="18" height="18"><use href="#exm"/></svg><svg class="i" style="left:782.0px;top:642.0px;" width="32" height="32"><use href="#pen"/></svg><div class="t" style="left:824.5px;top:645.4px;font-size:25.5px;letter-spacing:0.649px;">on start</div><svg class="i" style="left:790.0px;top:690.0px;" width="18" height="18"><use href="#exm"/></svg><svg class="i" style="left:820.0px;top:682.0px;" width="32" height="32"><use href="#clock"/></svg><div class="t" style="left:862.5px;top:685.4px;font-size:25.5px;letter-spacing:0.402px;">create task to self</div><svg class="i" style="left:828.0px;top:730.0px;" width="18" height="18"><use href="#exm"/></svg><svg class="i" style="left:858.0px;top:722.0px;" width="32" height="32"><use href="#repeat"/></svg><div class="t" style="left:900.5px;top:725.4px;font-size:25.5px;letter-spacing:0.313px;">repeat 2 times (v=3,increment 2)</div><svg class="i" style="left:866.0px;top:770.0px;" width="18" height="18"><use href="#exm"/></svg><svg class="i" style="left:896.0px;top:762.0px;" width="32" height="32"><use href="#repeat"/></svg><div class="t" style="left:938.5px;top:765.4px;font-size:25.5px;letter-spacing:0.436px;">repeat 5 times</div><svg class="i" style="left:904.0px;top:810.0px;" width="18" height="18"><use href="#exm"/></svg><svg class="i" style="left:934.0px;top:802.0px;" width="32" height="32"><use href="#repeat14"/></svg><div class="t" style="left:976.5px;top:805.4px;font-size:25.5px;letter-spacing:0.236px;">repeat 14 times,interval 0 frame(s) (a=190,increment (160/14))</div><svg class="i" style="left:972.0px;top:842.0px;" width="32" height="32"><use href="#bullet"/></svg><div class="t" style="left:1014.5px;top:845.4px;font-size:25.5px;letter-spacing:-0.222px;">create simple bullet ball_mid,COLOR_GOLDEN_YELLOW at (self.x,self.y)   v=v,angle=a</div><svg class="i" style="left:934.0px;top:882.0px;" width="32" height="32"><use href="#hglass"/></svg><div class="t" style="left:978.5px;top:885.4px;font-size:25.5px;letter-spacing:0.113px;">wait 10 frame(s)</div><svg class="i" style="left:896.0px;top:922.0px;" width="32" height="32"><use href="#hglass"/></svg><div class="t" style="left:940.5px;top:925.4px;font-size:25.5px;letter-spacing:0.080px;">wait 20 frame(s)</div><svg class="i" style="left:828.0px;top:970.0px;" width="18" height="18"><use href="#exm"/></svg><svg class="i" style="left:858.0px;top:962.0px;" width="32" height="32"><use href="#repeat"/></svg><div class="t" style="left:900.5px;top:965.4px;font-size:25.5px;letter-spacing:0.398px;">repeat 1 times</div><svg class="i" style="left:866.0px;top:1010.0px;" width="18" height="18"><use href="#exm"/></svg><svg class="i" style="left:896.0px;top:1002.0px;" width="32" height="32"><use href="#repeat"/></svg><div class="t" style="left:938.5px;top:1005.4px;font-size:25.5px;letter-spacing:0.436px;">repeat 5 times</div><svg class="i" style="left:904.0px;top:1050.0px;" width="18" height="18"><use href="#exm"/></svg><svg class="i" style="left:934.0px;top:1042.0px;" width="32" height="32"><use href="#repeat14"/></svg><div class="t" style="left:976.5px;top:1045.4px;font-size:25.5px;letter-spacing:0.236px;">repeat 14 times,interval 0 frame(s) (a=190,increment (160/14))</div><svg class="i" style="left:972.0px;top:1082.0px;" width="32" height="32"><use href="#bullet"/></svg><div class="t" style="left:1014.5px;top:1085.4px;font-size:25.5px;letter-spacing:-0.056px;">create simple bullet ball_mid,COLOR_RED at (self.x,self.y)   v=1,angle=a</div><svg class="i" style="left:934.0px;top:1122.0px;" width="32" height="32"><use href="#hglass"/></svg><div class="t" style="left:978.5px;top:1125.4px;font-size:25.5px;letter-spacing:0.113px;">wait 10 frame(s)</div><svg class="i" style="left:896.0px;top:1162.0px;" width="32" height="32"><use href="#hglass"/></svg><div class="t" style="left:940.5px;top:1165.4px;font-size:25.5px;letter-spacing:0.080px;">wait 20 frame(s)</div><svg class="i" style="left:858.0px;top:1202.0px;" width="32" height="32"><use href="#arrow"/></svg><div class="r" style="left:896px;top:1198px;width:396px;height:40px;background:repeating-conic-gradient(#000 0 25%,#ff8c1a 0 50%) 0 0/4px 4px"></div><div class="r" style="left:902px;top:1204px;width:384px;height:28px;background:#0078d7;"></div><div class="t" style="left:900.5px;top:1205.4px;font-size:25.5px;color:#fff;letter-spacing:0.255px;">move to (-100,144) in 20 frame(s)</div><svg class="i" style="left:828.0px;top:1250.0px;" width="18" height="18"><use href="#exp"/></svg><svg class="i" style="left:858.0px;top:1242.0px;" width="32" height="32"><use href="#repeat"/></svg><div class="t" style="left:900.5px;top:1245.4px;font-size:25.5px;letter-spacing:0.313px;">repeat 2 times (v=3,increment 2)</div><svg class="i" style="left:828.0px;top:1290.0px;" width="18" height="18"><use href="#exp"/></svg><svg class="i" style="left:858.0px;top:1282.0px;" width="32" height="32"><use href="#repeat"/></svg><div class="t" style="left:900.5px;top:1285.4px;font-size:25.5px;letter-spacing:0.436px;">repeat 1 times</div><svg class="i" style="left:782.0px;top:1322.0px;" width="32" height="32"><use href="#pen"/></svg><div class="t" style="left:824.5px;top:1325.4px;font-size:25.5px;letter-spacing:0.401px;">on finish</div><svg class="i" style="left:676.0px;top:1370.0px;" width="18" height="18"><use href="#exm"/></svg><svg class="i" style="left:706.0px;top:1362.0px;" width="32" height="32"><use href="#enemy"/></svg><div class="t" style="left:748.5px;top:1365.4px;font-size:25.5px;letter-spacing:-0.073px;">define enemy type "self_shut_low:Lunatic"</div><svg class="i" style="left:714.0px;top:1410.0px;" width="18" height="18"><use href="#exm"/></svg><svg class="i" style="left:744.0px;top:1402.0px;" width="32" height="32"><use href="#pen"/></svg><div class="t" style="left:786.5px;top:1405.4px;font-size:25.5px;letter-spacing:0.210px;">on create: ()</div><svg class="i" style="left:782.0px;top:1442.0px;" width="32" height="32"><use href="#clock"/></svg><div class="t" style="left:824.5px;top:1445.4px;font-size:25.5px;letter-spacing:0.375px;">create task to self</div><svg class="i" style="left:638.0px;top:1490.0px;" width="18" height="18"><use href="#exm"/></svg><svg class="i" style="left:668.0px;top:1482.0px;" width="32" height="32"><use href="#house2"/></svg><div class="t" style="left:711.5px;top:1485.4px;font-size:25.5px;letter-spacing:0.470px;">stage group "Spell Card"</div><svg class="i" style="left:676.0px;top:1530.0px;" width="18" height="18"><use href="#exm"/></svg><svg class="i" style="left:706.0px;top:1522.0px;" width="32" height="32"><use href="#house"/></svg><div class="t" style="left:749.5px;top:1525.4px;font-size:25.5px;letter-spacing:0.219px;">stage "Spell Card"</div><svg class="i" style="left:714.0px;top:1570.0px;" width="18" height="18"><use href="#exm"/></svg><svg class="i" style="left:744.0px;top:1562.0px;" width="32" height="32"><use href="#clock"/></svg><div class="t" style="left:786.5px;top:1565.4px;font-size:25.5px;letter-spacing:0.253px;">create task</div><svg class="i" style="left:752.0px;top:1610.0px;" width="18" height="18"><use href="#exm"/></svg><svg class="i" style="left:782.0px;top:1602.0px;" width="32" height="32"><use href="#ofold"/></svg><div class="t" style="left:825.5px;top:1605.4px;font-size:25.5px;letter-spacing:0.269px;">stage init</div><svg class="i" style="left:820.0px;top:1642.0px;" width="32" height="32"><use href="#music"/></svg><div class="t" style="left:861.5px;top:1645.4px;font-size:25.5px;letter-spacing:0.404px;">LoadMusic('spellcard','THlib\\music\\spellcard.ogg',75,0xc36e80/44100/4)</div><svg class="i" style="left:820.0px;top:1682.0px;" width="32" height="32"><use href="#bgimg"/></svg><div class="t" style="left:863.5px;top:1685.4px;font-size:25.5px;letter-spacing:0.597px;">set current stage's background to "temple"</div><svg class="i" style="left:782.0px;top:1722.0px;" width="32" height="32"><use href="#hglass"/></svg><div class="t" style="left:826.5px;top:1725.4px;font-size:25.5px;letter-spacing:0.046px;">wait 60 frame(s)</div><svg class="i" style="left:782.0px;top:1762.0px;" width="32" height="32"><use href="#dome"/></svg><div class="t" style="left:824.5px;top:1765.4px;font-size:25.5px;letter-spacing:0.438px;">play background music "spellcard"</div></div></div><div class="r" style="left:0px;top:1780px;width:2880px;height:2px;background:#d9d9d9;"></div><div class="r" style="left:0px;top:1782px;width:2880px;height:42px;background:#f0f0f0;"></div><div class="r" style="left:2877px;top:1785px;width:2px;height:38px;background:#dcdcdc;"></div></body></html>
